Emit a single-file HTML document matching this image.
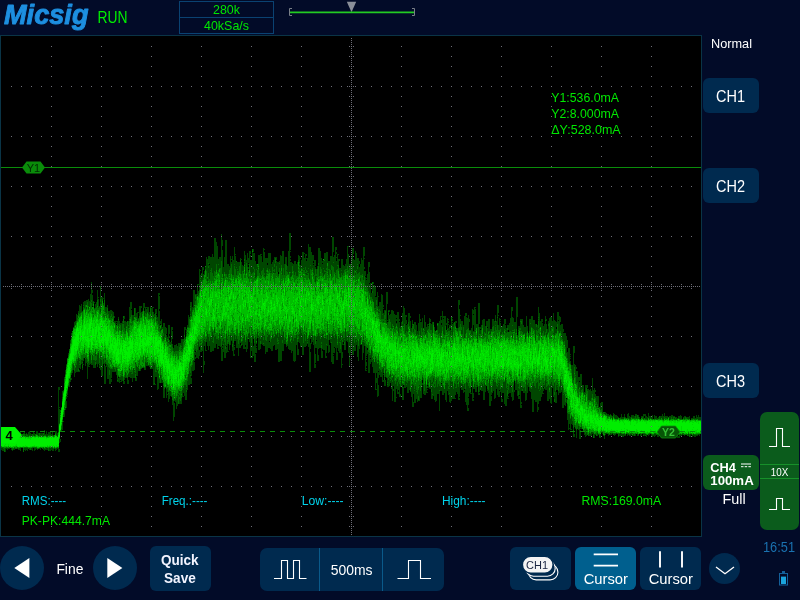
<!DOCTYPE html>
<html><head><meta charset="utf-8"><title>Micsig</title>
<style>
html,body{margin:0;padding:0;}
body{width:800px;height:600px;overflow:hidden;background:#020b28;font-family:"Liberation Sans",sans-serif;position:relative;color:#fff;}
.abs{position:absolute;}
.btn{position:absolute;background:#002a4f;border-radius:6px;}
.circ{position:absolute;background:#002a4f;border-radius:50%;}
svg{position:absolute;left:0;top:0;will-change:transform;}
svg text{font-family:"Liberation Sans",sans-serif;}
</style></head><body>
<svg id="plot" width="800" height="600" viewBox="0 0 800 600"><rect x="0" y="35" width="702" height="502" fill="#0a3446"/><rect x="1" y="36" width="700" height="500" fill="#000"/><g transform="translate(.5 0)" fill="none" stroke-width="1" shape-rendering="crispEdges"><path stroke="#004600" d="M1 431v19M2 435v16M3 431v20M4 433v19M5 432v20M6 433v16M7 433v17M8 433v16M9 436v13M10 433v15M11 432v18M12 432v19M13 431v19M14 434v16M15 434v15M16 434v15M17 432v17M18 432v18M19 433v17M20 431v20M21 435v13M22 434v14M23 433v19M24 432v18M25 434v17M26 433v17M27 434v17M28 432v17M29 431v19M30 433v17M31 434v16M32 434v17M33 431v17M34 433v18M35 434v16M36 431v18M37 431v19M38 433v16M39 433v16M40 433v17M41 433v15M42 433v16M43 433v17M44 430v21M45 434v16M46 431v19M47 434v16M48 432v19M49 432v19M50 431v20M51 434v16M52 431v20M53 435v16M54 435v14M55 431v20M56 431v19M57 433v16M58 387v65M59 387v3M59 407v1M59 409v34M59 449v3M60 410v22M60 439v3M61 407v25M62 391v39M63 390v27M63 421v1M64 377v40M65 370v40M66 364v35M66 401v7M67 358v37M67 396v1M68 353v34M69 349v38M70 340v42M71 333v42M71 378v2M72 331v42M73 327v43M74 322v55M75 321v52M76 314v58M77 315v57M78 311v61M79 305v63M79 370v2M80 306v63M81 304v60M82 311v59M83 302v59M83 364v1M84 301v57M85 301v65M86 300v63M87 300v79M88 299v68M89 301v64M89 366v1M90 294v70M91 282v83M92 290v3M92 295v11M92 307v58M93 301v67M94 302v1M94 308v60M95 304v64M96 302v62M97 290v77M98 297v1M98 299v65M99 306v62M100 286v84M101 286v1M101 297v79M102 297v79M103 298v1M103 303v61M104 293v91M105 307v57M105 366v18M106 307v60M107 305v74M108 311v68M109 311v73M110 310v74M111 310v68M111 379v3M112 311v61M113 312v60M114 316v2M114 321v51M115 321v51M116 321v1M116 323v1M116 325v50M117 321v61M118 317v60M118 378v4M119 321v62M120 323v57M120 381v1M121 323v59M122 321v60M123 316v68M124 316v3M124 321v59M124 381v3M125 321v57M126 322v56M127 321v63M128 321v56M128 380v4M129 307v70M130 302v76M131 302v7M131 310v68M132 315v67M133 315v63M134 308v70M135 308v73M136 313v63M136 377v4M137 312v64M138 312v1M138 318v53M139 306v65M140 306v65M141 306v2M141 312v57M142 311v57M143 303v65M144 303v5M144 311v59M145 307v63M146 307v1M146 309v57M147 307v59M148 307v59M149 312v55M150 306v63M151 308v61M152 307v62M153 307v1M153 312v73M154 314v71M155 309v68M155 384v1M156 309v5M156 315v62M157 317v73M158 293v96M159 293v2M159 296v13M159 311v72M160 321v3M160 325v58M161 319v64M162 327v56M163 323v75M164 323v75M165 327v61M166 328v6M166 335v63M167 337v55M167 394v1M168 325v77M169 325v9M169 336v2M169 340v59M170 342v54M171 327v70M172 327v3M172 331v8M172 344v61M173 348v73M174 345v56M174 403v14M175 345v57M176 344v65M177 346v60M178 343v61M179 343v61M180 343v61M181 339v65M182 339v58M183 339v54M183 396v1M184 327v69M185 327v3M185 337v63M186 329v71M187 325v65M188 315v70M189 317v68M190 302v82M191 302v74M191 378v6M192 307v64M193 290v81M194 290v71M194 362v8M195 294v57M195 352v3M195 357v2M196 294v64M197 284v74M198 284v1M198 291v68M199 269v78M199 350v6M200 270v1M200 275v77M201 273v79M202 267v84M203 267v3M203 274v99M204 271v75M204 361v4M205 266v85M206 257v85M206 350v1M207 259v87M208 256v94M209 256v8M209 265v81M210 257v95M211 257v95M212 254v97M213 257v94M214 238v110M215 238v110M216 242v102M217 246v103M218 259v87M218 347v2M219 257v89M220 257v90M221 234v127M222 240v6M222 250v95M222 346v2M222 349v12M223 267v85M224 257v101M225 240v118M226 240v106M226 347v6M227 264v88M228 264v80M228 351v1M229 266v84M230 256v89M231 259v1M231 262v79M232 256v95M233 260v96M234 247v94M234 345v1M234 347v3M234 354v2M235 254v1M235 256v85M236 261v87M237 262v86M238 262v94M239 262v86M240 258v85M240 345v3M241 259v1M241 262v84M242 265v80M243 266v83M244 251v98M245 255v90M245 347v2M246 260v92M247 253v96M248 258v5M248 264v1M248 267v2M248 270v69M249 251v91M250 251v3M250 255v2M250 260v98M251 260v91M251 357v1M252 249v109M253 249v3M253 253v86M253 346v10M254 253v109M255 261v92M255 354v8M256 264v80M256 346v1M256 348v5M257 264v74M258 255v95M259 255v95M260 254v95M261 254v1M261 256v88M262 262v83M263 248v98M264 249v1M264 252v94M265 258v96M266 258v94M267 258v5M267 265v87M268 253v95M269 253v88M269 342v6M270 253v96M271 264v87M272 262v89M273 260v86M274 257v88M275 257v93M276 257v3M276 261v89M277 262v87M278 262v10M278 274v88M279 261v101M280 255v106M281 256v105M282 251v100M283 251v100M284 264v80M285 257v87M286 257v90M287 266v80M288 251v98M289 233v117M290 233v17M290 251v1M290 256v2M290 259v2M290 262v88M291 262v91M292 263v88M293 264v97M294 261v101M295 261v100M296 264v81M297 262v93M298 255v87M298 349v6M299 256v87M300 258v1M300 265v82M301 260v87M302 252v103M303 252v103M304 253v1M304 258v89M305 254v93M306 254v2M306 258v1M306 261v85M307 258v86M308 244v103M309 247v125M310 247v92M310 343v6M310 352v20M311 252v92M312 255v87M313 255v6M313 263v1M313 265v80M314 260v108M315 260v6M315 267v81M315 354v9M315 364v4M316 269v71M316 341v7M317 266v95M318 248v101M318 355v6M319 248v100M320 251v97M321 258v100M322 261v2M322 264v85M322 351v7M323 259v91M324 253v97M325 253v105M326 252v101M326 356v2M327 252v94M328 261v92M329 261v79M329 345v7M330 256v87M331 256v106M332 237v127M333 237v15M333 257v96M333 354v1M333 356v8M334 255v92M334 348v5M335 247v101M336 247v3M336 252v2M336 257v1M336 261v99M337 254v94M337 352v8M338 254v1M338 259v92M339 259v2M339 268v85M340 268v85M341 259v109M342 259v86M342 352v6M342 364v1M343 265v77M343 344v1M344 266v84M345 264v86M346 259v82M347 246v96M348 246v1M348 254v99M349 264v103M350 264v89M350 354v1M350 359v1M351 256v91M352 248v107M353 248v6M353 259v96M354 260v91M355 251v100M356 253v92M357 258v99M358 258v103M359 261v3M359 267v82M360 264v81M361 258v87M362 260v100M363 247v106M364 247v9M364 258v1M364 267v2M364 271v75M365 271v5M365 277v94M366 278v1M366 280v76M366 357v1M366 359v1M366 362v4M366 368v1M366 370v1M367 274v74M367 350v4M368 262v111M369 262v5M369 272v11M369 284v89M370 283v75M370 359v5M371 283v2M371 293v69M372 282v85M373 282v2M373 285v88M374 285v88M375 287v9M375 297v93M376 297v76M376 378v5M376 389v1M377 292v105M378 296v1M378 306v65M378 372v6M378 385v11M379 302v73M380 302v75M381 294v83M382 295v87M383 305v2M383 308v1M383 313v60M383 374v1M383 380v2M384 310v76M385 310v67M385 380v6M386 292v86M387 292v12M387 320v1M387 322v65M388 310v77M389 310v2M389 315v71M390 314v69M391 310v79M392 310v91M393 311v75M393 389v2M394 314v88M395 315v87M396 315v3M396 319v2M396 323v66M396 397v1M397 312v82M398 312v78M398 392v2M399 319v2M399 322v75M400 326v61M400 394v3M401 322v65M402 313v87M403 306v79M403 387v13M404 308v80M405 315v73M406 315v2M406 320v4M406 325v62M407 324v69M408 313v80M409 313v77M410 316v2M410 321v71M411 328v69M412 320v87M413 324v70M413 402v5M414 322v81M415 322v81M416 325v74M417 331v71M418 323v78M419 314v87M420 319v2M420 322v76M421 322v76M422 318v62M422 383v2M422 386v1M423 328v66M424 315v80M425 322v73M426 327v66M427 324v61M427 386v2M427 389v1M427 392v1M428 324v1M428 326v62M429 318v71M430 319v3M430 323v66M431 324v75M432 322v77M433 322v74M434 327v73M435 331v71M436 330v71M437 323v71M438 323v71M439 321v90M440 316v75M441 316v1M441 320v3M441 325v58M441 384v7M442 311v84M443 316v2M443 319v76M444 316v77M445 316v84M446 323v2M446 330v72M447 318v73M448 319v1M448 321v2M448 324v1M448 328v67M449 325v77M450 325v3M450 330v73M451 317v84M452 317v1M452 319v2M452 322v1M452 324v75M453 323v76M454 322v77M455 321v74M455 398v1M456 321v2M456 328v64M457 328v66M458 300v100M459 300v5M459 309v88M459 398v2M460 315v1M460 319v69M461 321v69M462 321v69M463 325v68M464 316v73M464 390v2M465 313v89M466 313v3M466 317v88M467 318v93M468 315v82M468 398v7M468 408v3M469 319v3M469 330v63M470 330v64M471 328v58M471 393v1M472 309v92M473 310v4M473 315v10M473 331v58M473 393v5M473 399v2M474 307v82M475 307v1M475 309v83M476 324v68M477 324v63M478 303v92M479 303v21M479 327v65M479 393v2M480 327v2M480 330v60M481 325v66M482 320v71M483 319v81M484 319v81M485 326v66M486 321v65M487 321v6M487 328v63M488 319v74M489 319v87M490 329v77M491 329v66M491 396v5M492 319v74M493 319v72M494 321v78M495 315v83M496 321v68M497 305v90M498 305v8M498 315v1M498 325v72M499 318v72M499 391v6M500 319v1M500 321v1M500 323v69M501 326v76M502 326v67M502 399v3M503 324v69M504 319v85M505 319v5M505 325v81M506 328v78M507 325v74M508 325v5M508 332v62M508 396v1M508 398v1M509 323v70M510 318v68M510 387v6M511 307v90M512 307v4M512 317v84M513 318v82M514 322v59M514 390v2M515 322v68M516 297v93M517 297v20M517 335v61M518 326v73M519 326v69M519 396v3M520 319v89M521 319v72M521 402v2M521 405v3M522 319v72M523 325v68M524 327v66M525 327v74M526 316v84M527 326v67M528 333v54M529 319v72M530 319v73M531 316v83M532 316v96M533 320v92M534 320v80M535 324v78M536 324v78M537 325v87M538 307v97M538 407v3M539 313v88M540 321v80M541 319v78M542 319v3M542 323v71M543 326v61M543 388v3M543 393v1M544 324v65M545 316v74M546 319v2M546 324v66M547 329v72M548 321v80M549 318v81M550 317v86M551 317v87M552 321v67M553 313v84M554 320v82M555 321v82M556 322v5M556 329v61M556 392v11M557 312v78M558 312v8M558 321v74M559 316v77M560 317v5M560 325v68M561 324v68M562 324v84M563 329v3M563 333v75M564 333v72M565 333v73M566 336v62M566 399v4M567 340v8M567 352v68M568 348v82M569 348v76M569 428v1M570 354v1M570 356v1M570 358v1M570 361v69M571 365v59M571 429v1M572 365v60M573 346v91M574 346v7M574 364v63M574 434v3M575 365v64M576 367v2M576 371v67M577 371v58M578 377v53M579 377v4M579 382v57M580 374v55M580 430v9M581 374v55M582 385v44M583 385v46M584 392v43M585 385v52M586 385v51M587 385v3M587 389v46M588 389v47M589 390v46M590 389v47M591 391v45M592 378v56M593 390v48M594 388v50M595 390v2M595 394v41M596 396v40M597 396v40M598 396v39M599 407v31M600 403v35M601 402v31M602 402v32M603 412v24M604 412v27M605 412v23M606 413v21M607 414v20M608 414v22M609 415v20M610 414v21M611 415v20M612 416v18M613 413v22M614 414v22M615 415v20M616 415v19M617 416v18M618 417v20M619 418v18M620 417v19M621 414v23M622 417v20M623 417v20M624 414v22M625 417v19M626 418v16M627 414v22M628 413v22M629 416v20M630 417v19M631 415v20M632 415v21M633 415v21M634 416v20M635 414v22M636 414v20M637 415v21M638 415v21M639 417v17M640 419v17M641 416v20M642 416v18M643 414v22M644 414v2M644 418v18M645 414v22M646 416v21M647 417v18M648 413v23M649 416v19M650 416v18M651 416v20M652 415v22M653 419v17M654 415v22M655 416v20M656 416v19M657 418v19M658 417v20M659 416v20M660 416v19M661 416v21M662 414v24M663 416v19M664 413v23M665 416v21M666 416v20M667 416v18M668 417v20M669 416v22M670 416v21M671 415v21M672 415v20M673 416v20M674 416v20M675 417v20M676 417v18M677 418v20M678 416v19M678 436v2M679 416v22M680 415v21M681 416v20M682 419v16M683 417v18M684 416v20M685 416v19M686 417v18M687 417v19M688 417v19M689 416v21M690 420v17M691 418v17M692 418v19M693 416v20M694 416v21M695 418v19M696 415v21M697 417v19M698 415v20M699 417v19M700 417v17"/><path stroke="#006c00" d="M1 436v12M2 435v13M3 435v14M4 436v16M5 435v13M6 433v15M7 434v14M8 435v13M9 437v11M10 435v13M11 432v16M12 434v16M13 436v13M14 436v12M15 436v13M16 436v13M17 435v13M18 435v14M19 435v13M20 435v13M21 435v13M22 434v14M23 434v18M24 434v14M25 436v12M26 434v14M27 435v13M28 436v13M29 435v13M30 436v14M31 436v12M32 434v14M33 435v13M34 436v12M35 434v14M36 434v14M37 435v14M38 436v13M39 433v15M40 435v13M41 435v13M42 435v14M43 433v2M43 436v12M44 435v14M45 435v14M46 436v12M47 436v12M48 435v16M49 435v13M50 435v13M51 436v12M52 435v13M53 436v13M54 435v13M55 433v16M56 435v13M57 436v12M58 432v16M59 423v16M60 410v2M60 413v19M61 407v22M62 397v25M63 391v24M63 416v1M64 379v31M65 374v34M66 365v31M67 358v33M68 355v31M69 349v30M69 380v2M70 343v37M71 338v35M72 331v39M73 328v37M74 326v45M75 325v43M76 321v44M77 318v43M78 313v45M78 369v2M79 314v46M79 361v2M79 364v1M80 313v52M81 312v48M82 312v48M82 362v1M82 365v3M83 305v1M83 307v51M84 308v50M85 305v52M85 358v1M86 305v2M86 309v49M87 302v60M87 363v1M88 306v1M88 309v54M89 307v46M90 302v53M91 300v2M91 303v60M92 307v48M93 302v58M94 309v51M95 308v44M95 353v1M95 356v5M95 362v3M96 307v53M97 300v55M98 308v45M99 307v56M99 364v1M99 367v1M100 299v3M100 304v3M100 308v1M100 312v43M100 356v1M100 358v1M101 304v56M102 299v67M102 367v1M103 305v54M104 300v63M104 365v1M105 312v46M105 360v2M106 313v51M107 308v57M108 314v53M109 318v50M109 370v5M110 316v53M111 314v3M111 318v51M112 317v52M113 316v5M113 322v45M114 323v46M115 324v47M116 325v43M117 324v54M117 380v1M118 319v1M118 326v1M118 328v48M119 324v53M120 325v52M121 331v45M122 324v50M122 375v1M123 316v2M123 319v4M123 324v57M124 328v49M125 331v41M126 326v51M127 321v57M128 325v1M128 328v46M129 319v1M129 321v48M129 370v2M130 317v55M131 315v57M131 373v1M132 321v53M133 320v48M134 308v8M134 317v53M134 371v1M135 317v46M135 364v9M135 374v4M136 317v49M137 321v46M138 319v47M138 367v1M139 316v55M140 313v56M141 317v51M142 312v56M143 308v59M144 316v52M145 313v49M146 314v49M147 312v50M148 314v51M149 315v50M150 308v61M151 316v52M152 312v54M153 315v2M153 318v45M154 317v48M154 383v1M155 313v59M156 318v1M156 321v48M156 371v1M157 321v49M158 324v50M159 326v1M159 328v51M160 325v4M160 331v44M160 378v5M161 325v1M161 330v49M162 329v51M163 333v3M163 339v47M164 337v52M165 334v53M166 341v48M167 339v1M167 342v46M168 339v3M168 343v49M168 393v1M169 344v47M170 345v46M171 341v1M171 344v52M172 347v53M173 351v50M174 352v47M175 351v49M176 351v47M177 351v45M178 351v43M178 395v9M179 347v44M179 393v2M179 397v2M180 345v56M181 346v1M181 348v1M181 350v48M182 349v41M183 342v46M184 335v2M184 338v47M185 339v46M186 332v1M186 334v53M186 388v1M186 390v2M187 327v54M188 327v47M189 319v52M190 306v1M190 308v3M190 314v1M190 316v57M190 375v1M191 316v51M192 310v55M193 308v52M194 305v1M194 307v43M194 352v1M195 295v4M195 301v48M196 297v55M197 294v1M197 296v54M198 295v47M199 290v56M200 278v1M200 280v1M200 282v1M200 285v57M200 343v2M201 274v1M201 281v69M202 280v63M203 278v62M204 275v64M204 340v1M205 266v1M205 269v73M206 271v68M207 277v2M207 281v53M208 263v1M208 266v2M208 273v64M209 279v62M210 270v1M210 272v65M211 268v69M211 338v1M212 273v59M212 341v1M213 276v59M213 337v6M214 271v58M214 333v4M215 272v64M216 264v75M217 272v67M218 264v1M218 270v70M219 268v65M220 268v71M221 261v74M221 337v9M221 348v1M222 274v63M222 338v3M223 278v61M223 344v1M224 272v70M225 274v71M225 346v3M226 274v60M227 277v62M227 340v4M228 274v61M228 336v6M229 270v75M230 268v67M231 264v72M231 337v3M232 275v61M232 344v3M233 275v68M234 264v1M234 266v69M235 269v70M236 261v1M236 267v1M236 275v61M237 269v1M237 271v68M238 271v73M239 266v74M240 260v71M241 274v68M241 344v1M242 271v63M242 335v6M243 271v1M243 273v65M244 259v2M244 262v1M244 264v71M245 274v68M246 263v74M247 267v72M248 272v5M248 278v56M248 338v1M249 264v69M250 272v66M251 274v69M252 249v3M252 273v61M252 335v1M253 267v2M253 272v64M254 269v74M255 278v59M256 269v1M256 277v62M256 341v2M257 264v3M257 270v62M258 264v72M258 337v1M259 273v64M260 275v64M260 341v3M261 271v4M261 276v60M262 270v63M262 334v1M263 268v66M263 335v1M263 337v3M263 343v1M264 273v2M264 276v60M265 277v63M266 270v2M266 273v68M267 268v66M267 335v2M268 271v64M269 269v66M270 271v1M270 273v69M271 273v66M272 267v68M273 270v1M273 273v65M274 264v3M274 269v3M274 273v64M275 258v5M275 273v61M276 266v69M277 272v61M277 338v4M277 343v1M278 276v61M278 340v1M278 342v2M279 263v1M279 268v65M280 271v65M281 265v70M282 275v60M282 340v3M283 268v64M284 275v65M285 264v74M286 265v5M286 271v74M287 272v72M288 274v61M289 272v65M290 272v1M290 277v65M291 276v64M291 342v1M292 266v71M293 271v70M294 275v63M295 272v66M296 276v56M296 333v2M297 276v66M298 260v75M298 336v3M299 262v1M299 265v2M299 268v63M299 332v2M300 271v58M301 268v65M302 269v2M302 272v63M303 268v1M303 270v73M304 270v64M305 267v3M305 272v1M305 274v67M306 270v3M306 275v58M307 271v1M307 273v1M307 275v64M307 340v1M307 342v1M308 268v1M308 273v65M309 279v56M310 265v1M310 269v68M311 270v65M312 268v67M313 273v2M313 276v64M314 275v61M315 269v7M315 282v62M316 274v2M316 277v60M317 269v67M318 263v2M318 266v67M319 276v60M320 267v72M321 269v66M321 342v2M321 345v3M322 273v61M323 259v1M323 268v1M323 276v58M323 335v2M324 260v1M324 270v2M324 274v64M325 271v1M325 273v63M325 337v1M326 268v2M326 271v68M326 344v1M327 263v68M327 332v3M328 269v1M328 275v65M329 269v65M330 270v69M331 265v5M331 276v61M331 338v1M331 342v1M332 266v68M333 262v1M333 267v69M334 272v66M335 273v1M335 275v59M336 270v66M337 265v1M337 269v76M338 265v69M338 335v1M339 274v64M339 342v1M340 277v57M340 340v1M340 342v7M341 270v1M341 273v67M342 275v60M342 338v1M342 340v2M343 273v65M344 270v68M344 339v1M344 342v3M345 269v60M346 269v1M346 271v66M347 266v71M347 338v2M348 270v64M349 268v6M349 275v60M349 336v6M350 264v1M350 266v4M350 272v64M351 266v1M351 275v62M352 267v74M353 275v61M354 270v73M355 271v2M355 275v64M356 270v1M356 272v67M356 340v2M357 264v1M357 266v3M357 274v66M358 273v73M359 272v67M360 275v3M360 281v57M361 275v69M362 274v68M363 280v57M363 339v1M363 341v1M364 276v67M365 285v61M366 286v61M367 288v60M368 291v61M369 293v60M369 354v1M370 297v58M371 297v53M372 282v2M372 291v2M372 299v59M372 359v1M373 302v57M374 308v54M375 308v1M375 310v47M375 358v1M376 300v5M376 306v56M377 307v57M378 310v1M378 313v47M378 362v1M379 309v3M379 313v56M380 311v59M381 319v53M382 314v1M382 319v50M383 319v2M383 322v46M384 315v62M384 378v2M385 311v8M385 320v50M386 323v54M387 325v53M387 382v1M387 384v1M388 311v1M388 313v2M388 322v55M388 378v2M389 319v57M389 377v1M390 322v52M390 377v2M390 380v1M391 328v52M392 324v3M392 328v50M392 380v2M393 326v50M394 329v52M395 327v57M396 324v57M397 327v52M397 382v4M398 333v49M399 328v56M400 329v58M401 327v51M401 379v1M402 321v3M402 326v58M402 387v1M403 326v1M403 328v57M404 324v61M405 333v48M406 331v51M406 384v1M407 332v51M408 322v59M409 326v55M410 331v60M411 332v55M412 324v1M412 326v55M412 382v2M413 324v5M413 332v53M414 329v60M414 390v1M415 330v56M416 335v55M416 391v1M417 334v60M418 335v55M418 396v4M419 331v54M419 386v1M420 335v56M421 328v58M422 332v45M423 328v57M424 330v1M424 332v59M425 334v47M426 333v55M427 330v50M428 329v53M428 383v2M429 323v64M430 330v50M431 330v53M431 384v1M431 389v3M432 333v49M432 384v2M432 394v1M433 322v56M433 382v5M434 330v54M434 386v2M435 331v56M436 330v50M437 323v3M437 330v57M438 334v50M439 333v53M439 390v1M440 336v1M440 338v49M441 333v48M441 382v1M442 327v58M443 334v53M444 335v54M445 326v57M445 384v1M446 330v53M447 329v1M447 332v51M448 331v54M448 386v3M449 327v1M449 331v56M449 388v1M449 393v1M450 335v46M451 317v4M451 327v4M451 332v50M451 384v1M452 335v47M453 327v62M454 322v61M455 326v58M455 387v1M456 328v60M457 331v50M457 383v1M458 328v59M459 327v55M460 324v59M461 327v3M461 334v50M461 386v1M462 334v50M463 327v59M464 338v46M465 334v55M466 330v52M467 329v54M468 328v53M468 382v4M469 331v57M470 331v3M470 335v53M470 389v3M471 334v44M471 379v3M472 335v46M473 332v55M474 332v52M475 330v1M475 332v55M476 328v57M476 386v1M477 339v1M477 341v44M478 327v65M479 334v1M479 336v50M480 334v51M480 386v1M480 388v2M481 330v53M481 384v2M481 387v1M482 325v59M483 336v50M484 332v51M485 333v52M486 326v60M487 334v46M487 381v8M488 331v59M489 331v2M489 334v45M490 334v52M491 331v61M492 327v59M493 326v54M494 331v51M495 321v1M495 325v1M495 327v55M496 330v5M496 336v50M497 317v1M497 325v59M497 385v2M498 330v53M498 384v1M499 330v51M499 382v1M500 329v3M500 335v54M501 334v52M502 332v56M503 334v48M504 329v53M505 330v1M505 332v46M506 333v55M507 328v2M507 332v52M507 386v1M507 388v1M507 390v6M508 332v58M509 332v53M510 331v54M511 332v53M512 325v1M512 330v1M512 332v2M512 338v54M513 330v1M513 332v53M514 329v51M515 333v50M516 329v51M517 337v47M518 330v1M518 332v52M518 387v1M518 391v4M519 328v61M520 321v1M520 328v2M520 331v52M521 321v3M521 331v56M522 332v55M522 389v2M523 334v54M524 333v54M525 339v52M526 333v47M527 331v54M528 337v46M529 331v56M530 323v1M530 332v56M531 327v58M531 387v2M532 328v58M533 329v54M534 330v56M535 340v48M536 324v3M536 330v53M537 331v51M538 317v1M538 319v1M538 321v7M538 329v4M538 334v55M539 328v6M539 336v44M539 383v3M539 390v1M540 327v63M541 335v50M542 333v56M543 331v52M543 384v1M544 335v50M544 387v1M545 320v1M545 332v48M546 329v4M546 337v45M546 383v4M547 334v52M548 324v2M548 332v53M549 323v63M549 387v5M550 331v53M551 328v54M552 326v59M553 327v6M553 334v52M554 335v48M554 392v3M554 399v3M555 333v58M556 333v52M557 324v59M557 384v1M557 386v1M558 331v60M559 333v54M560 331v49M561 334v1M561 336v54M562 339v47M563 342v51M563 394v1M564 341v53M565 347v55M566 353v45M567 358v55M568 363v51M569 362v52M570 364v55M571 369v47M572 378v43M573 380v48M573 430v1M574 367v58M575 375v1M575 377v51M576 383v47M577 382v47M578 389v37M579 387v42M580 392v35M581 390v37M582 389v40M583 393v38M584 394v38M585 393v1M585 395v39M586 388v42M586 431v1M587 391v44M588 400v36M589 400v33M590 401v33M591 398v34M592 394v38M593 399v34M593 435v3M594 397v37M595 398v36M596 402v3M596 406v30M597 404v29M598 408v26M599 407v30M600 410v24M601 409v23M602 413v19M603 412v23M604 412v1M604 414v22M605 415v18M606 414v19M607 416v18M608 416v18M609 416v19M610 415v18M611 416v18M612 419v14M613 415v20M614 418v16M615 419v15M616 419v14M617 419v15M618 418v18M619 418v16M620 418v15M621 419v15M622 419v15M623 419v15M624 417v17M625 418v17M626 418v16M627 418v16M628 418v16M629 419v16M630 419v15M631 417v17M632 418v17M633 418v16M634 418v18M635 416v18M636 418v16M637 415v19M638 417v18M639 419v15M640 419v15M641 418v16M642 417v17M643 419v15M643 435v1M644 418v16M645 419v15M645 435v1M646 419v16M647 420v15M648 418v16M649 419v15M650 418v16M651 419v15M652 419v16M653 419v16M654 419v15M655 419v15M656 419v16M657 419v16M658 419v16M659 416v18M660 419v15M661 418v16M662 419v15M662 436v2M663 420v15M664 417v17M665 418v17M666 418v17M667 419v15M668 417v18M669 420v15M670 419v16M671 417v17M672 419v16M673 417v19M674 417v1M674 419v16M675 418v19M676 419v15M677 419v16M678 418v16M679 419v16M680 419v15M681 419v16M682 419v15M683 418v17M684 419v16M685 417v18M686 418v17M687 419v17M688 419v15M689 419v18M690 420v14M691 419v15M692 419v16M693 419v15M694 419v16M695 419v16M696 419v16M697 419v16M698 420v14M699 420v14M700 420v14"/><path stroke="#009600" d="M1 437v10M2 436v11M3 436v11M4 436v12M5 436v12M6 436v11M7 435v1M7 437v11M8 436v12M9 438v9M10 436v12M11 436v12M12 435v13M13 436v12M14 436v11M15 436v12M16 436v12M17 436v11M18 436v12M19 436v12M20 436v11M21 437v10M22 437v10M23 436v12M24 436v11M25 436v11M26 437v10M27 437v10M28 437v11M29 436v12M30 436v12M31 437v11M32 436v11M33 436v11M34 436v11M35 436v11M36 435v12M37 435v13M38 436v12M39 436v12M40 437v10M41 436v12M42 437v11M43 436v11M44 436v12M45 436v11M46 437v10M47 437v11M48 436v12M49 436v11M50 436v12M51 437v10M52 436v11M53 437v11M54 435v12M55 434v14M56 436v12M57 437v10M58 432v16M59 424v15M60 413v1M60 415v16M61 408v18M62 399v21M62 421v1M63 392v22M64 383v24M64 409v1M65 375v26M65 407v1M66 367v27M66 395v1M67 359v31M68 357v28M69 351v28M70 344v33M71 339v32M72 331v1M72 333v31M73 328v35M74 328v38M75 325v38M75 366v1M76 323v36M77 321v38M78 316v2M78 319v38M79 317v41M80 316v43M81 313v42M82 320v35M83 310v44M84 309v40M84 353v1M85 313v42M86 305v2M86 310v43M87 306v53M88 310v1M88 313v48M89 307v3M89 312v38M90 311v42M91 309v45M91 355v5M92 307v2M92 311v1M92 314v41M93 304v2M93 307v6M93 314v1M93 317v36M93 355v1M94 310v43M95 314v35M96 311v43M97 306v1M97 310v43M98 310v41M99 314v44M100 314v38M101 308v44M102 301v56M103 306v4M103 311v3M103 317v39M104 312v1M104 314v1M104 318v36M104 355v3M105 314v1M105 316v38M106 318v42M107 315v45M108 318v37M108 356v7M109 320v44M110 320v40M110 362v5M111 321v1M111 323v39M111 364v4M112 319v46M112 366v1M113 322v44M114 323v44M115 330v37M116 331v36M117 326v42M117 369v1M118 332v43M119 327v1M119 330v47M120 331v42M120 374v1M121 334v37M122 330v40M123 332v45M124 334v41M125 334v38M126 327v1M126 329v44M127 332v39M127 373v2M128 336v37M129 328v1M129 330v36M129 367v1M130 319v4M130 325v45M131 322v1M131 326v41M132 325v45M133 321v47M134 317v2M134 320v48M134 369v1M135 318v44M136 319v1M136 321v43M137 322v45M138 321v40M138 362v1M139 322v38M139 365v4M140 318v47M141 318v48M142 314v46M142 362v2M142 365v2M143 311v45M143 363v3M144 320v47M145 317v40M146 317v41M147 313v44M147 358v2M147 361v1M148 319v46M149 319v44M150 314v2M150 319v46M151 318v45M151 364v1M152 320v42M153 319v43M154 323v40M155 317v46M156 323v44M157 325v45M158 331v36M158 368v1M158 371v2M159 332v46M160 326v2M160 333v35M161 330v45M162 329v4M162 341v39M163 341v41M164 340v4M164 345v42M165 338v49M166 342v41M167 346v39M167 386v1M168 341v1M168 346v41M169 345v2M169 348v42M170 345v2M170 349v1M170 351v1M170 353v35M170 390v1M171 352v40M172 351v44M173 356v36M173 393v1M174 354v42M174 397v1M175 356v1M175 358v35M176 354v42M177 356v37M178 359v31M179 350v1M179 352v39M180 351v38M180 390v1M181 352v39M181 394v1M182 352v34M183 348v37M183 386v1M184 341v1M184 345v37M185 340v1M185 342v33M185 378v2M186 336v44M187 328v1M187 330v2M187 333v44M188 328v5M188 334v40M189 328v35M190 320v41M190 364v2M191 317v48M192 312v46M192 359v2M193 310v50M194 305v1M194 312v33M195 305v39M195 345v1M196 305v38M197 296v46M197 344v1M198 297v42M199 293v47M200 286v2M200 289v50M201 283v3M201 287v1M201 289v50M201 340v1M201 343v1M202 283v1M202 285v53M203 280v55M204 275v57M205 266v1M205 270v7M205 279v58M206 281v2M206 284v46M206 331v1M206 334v2M207 277v1M207 284v47M208 281v1M208 283v51M209 283v2M209 286v48M210 281v50M210 332v5M211 284v43M212 281v48M213 283v48M214 278v2M214 281v46M215 276v1M215 279v53M215 333v1M216 270v4M216 275v58M217 274v4M217 279v3M217 283v38M217 322v1M217 324v1M217 327v6M218 273v50M218 325v10M218 336v2M219 269v3M219 275v55M219 332v1M220 289v45M220 336v1M221 278v1M221 280v1M221 282v43M221 327v2M222 274v3M222 278v50M222 331v2M223 286v45M223 332v1M223 334v1M224 274v2M224 281v45M224 331v2M224 337v1M225 278v46M225 325v13M226 277v1M226 280v51M226 332v1M227 278v1M227 280v56M228 282v48M229 274v1M229 276v1M229 278v1M229 281v54M229 336v1M230 278v2M230 283v50M231 274v56M231 332v1M232 279v49M233 277v54M233 332v1M234 282v1M234 284v49M235 278v57M236 278v51M237 276v1M237 278v1M237 281v48M238 275v61M239 273v2M239 277v56M240 274v57M241 278v55M241 334v2M241 339v2M242 280v46M242 337v1M243 274v57M243 332v1M244 265v1M244 267v8M244 278v53M244 332v3M245 278v50M245 329v11M246 273v61M247 277v52M247 332v4M248 279v54M248 338v1M249 270v3M249 274v2M249 282v45M250 279v48M250 328v7M251 279v1M251 281v45M252 251v1M252 283v46M252 330v1M252 333v1M253 277v1M253 282v52M254 273v2M254 276v1M254 280v50M254 331v4M254 336v2M255 281v51M256 279v55M256 341v1M257 264v1M257 276v53M258 266v1M258 268v1M258 276v56M258 333v2M259 278v53M259 332v1M260 279v1M260 282v50M261 278v50M261 330v3M262 275v4M262 280v47M263 277v53M264 278v57M265 280v50M266 276v56M267 270v2M267 274v1M267 276v3M267 280v50M268 274v58M269 273v61M270 281v50M271 276v1M271 278v53M271 332v6M272 274v54M272 329v2M273 273v1M273 279v48M273 328v6M274 285v44M274 335v1M275 278v53M276 276v1M276 278v51M276 330v4M277 277v51M277 329v1M278 278v55M279 274v55M280 285v49M281 268v3M281 273v1M281 279v1M281 281v48M282 281v46M283 278v47M283 326v5M284 283v54M285 278v52M285 331v1M286 276v59M286 337v2M286 340v2M287 275v66M288 275v58M289 272v1M289 279v49M289 329v6M290 281v51M290 333v1M290 339v2M291 277v3M291 281v53M292 272v1M292 275v4M292 280v3M292 284v51M293 278v41M293 322v9M294 282v53M295 280v48M295 329v4M295 334v1M296 279v5M296 286v46M297 278v1M297 280v1M297 283v46M297 332v2M297 338v1M298 262v4M298 267v2M298 271v1M298 277v55M299 272v1M299 274v5M299 280v45M300 271v2M300 274v1M300 278v49M301 269v2M301 272v56M301 329v1M302 277v51M303 274v1M303 281v51M304 274v2M304 278v1M304 280v1M304 282v44M304 330v1M304 333v1M305 278v54M305 334v1M306 280v48M306 331v1M307 280v59M308 278v4M308 283v53M309 280v52M310 282v51M311 274v1M311 284v39M312 270v1M312 272v59M313 279v57M314 282v53M315 284v2M315 287v1M315 291v45M316 281v53M317 278v2M317 281v48M317 333v1M318 277v1M318 279v50M319 279v54M320 272v1M320 276v5M320 290v42M320 333v1M321 276v1M321 278v55M322 277v53M323 259v1M323 278v53M324 275v4M324 280v45M324 326v5M324 334v2M324 337v1M325 280v52M326 280v55M327 263v3M327 272v1M327 274v1M327 276v1M327 278v44M327 323v1M327 333v2M328 281v2M328 287v46M329 278v54M330 274v60M331 280v54M332 278v53M333 277v3M333 284v39M333 325v1M333 327v1M334 274v56M334 331v1M334 334v1M335 283v48M336 278v56M337 279v60M337 342v1M338 271v7M338 279v49M338 335v1M339 277v51M339 329v1M340 278v55M341 277v56M342 280v52M343 276v55M344 276v1M344 278v54M345 272v56M346 275v4M346 280v43M346 324v8M347 271v1M347 274v57M348 278v53M349 278v47M349 332v1M350 275v51M350 327v8M351 278v57M352 277v6M352 284v49M353 280v52M353 333v1M354 276v2M354 279v54M354 336v1M355 271v1M355 281v1M355 285v2M355 288v39M355 329v4M356 280v1M356 282v1M356 284v53M357 283v49M358 279v55M358 339v2M359 277v57M360 282v3M360 288v38M360 330v6M361 283v52M361 340v4M362 276v1M362 289v51M363 283v51M364 291v49M365 289v1M365 291v45M365 338v1M365 340v1M366 292v4M366 298v1M366 301v39M366 341v3M367 292v53M368 299v43M369 295v4M369 304v46M370 300v53M371 302v1M371 304v43M372 301v50M372 356v1M373 302v54M373 358v1M374 311v51M375 314v3M375 318v38M376 312v46M377 309v1M377 312v48M377 362v1M378 315v1M378 317v37M379 319v46M379 367v1M380 320v1M380 322v2M380 330v33M381 322v45M382 323v44M383 323v43M384 323v43M384 368v5M385 323v39M386 324v1M386 326v43M386 371v2M387 328v44M388 328v44M389 329v46M390 328v1M390 331v40M391 331v44M391 376v1M392 329v45M392 376v1M393 326v1M393 328v1M393 335v40M394 332v43M395 333v41M395 375v2M395 378v2M396 326v2M396 330v48M397 331v46M398 336v41M399 336v44M400 333v47M400 381v1M401 330v1M401 333v5M401 341v33M402 326v54M402 381v2M403 331v45M403 377v1M403 379v1M403 382v1M404 334v47M405 335v42M406 337v39M407 337v3M407 341v39M408 327v2M408 331v4M408 336v34M408 371v6M409 329v3M409 334v45M410 335v44M410 388v1M411 335v42M411 379v5M412 333v44M413 334v48M414 335v45M415 334v1M415 336v42M415 383v1M416 336v43M416 380v2M417 339v38M418 338v2M418 341v1M418 343v38M418 387v1M419 335v1M419 339v39M420 338v41M420 380v1M421 338v42M422 339v36M423 329v1M423 335v43M424 336v48M425 335v5M425 343v35M426 337v48M427 331v1M427 338v41M428 332v44M429 333v45M429 382v5M430 334v43M431 336v40M432 340v33M432 374v1M433 325v51M434 334v40M434 375v1M435 334v45M435 380v1M436 331v1M436 335v1M436 337v40M437 324v1M437 335v43M438 338v39M439 336v45M440 343v39M441 336v2M441 343v1M441 345v31M441 378v1M442 331v7M442 339v38M443 339v42M443 383v2M444 337v1M444 339v50M445 335v46M446 333v1M446 335v1M446 341v40M447 335v1M447 337v43M448 334v1M448 337v44M449 340v40M450 337v4M450 343v34M451 327v2M451 338v39M452 340v41M453 332v54M454 336v45M455 327v2M455 330v6M455 337v42M456 331v46M457 332v44M457 378v1M458 336v44M458 382v2M459 331v46M460 331v8M460 341v39M461 335v1M461 338v1M461 340v43M462 338v38M462 377v3M463 339v43M463 383v1M464 338v45M465 338v45M466 333v45M467 341v38M468 338v40M469 333v2M469 340v43M470 335v3M470 340v46M471 338v37M472 339v40M473 338v2M473 342v45M474 336v46M475 337v41M475 381v1M476 328v7M476 336v1M476 338v39M477 343v39M478 336v50M479 338v42M479 382v1M480 336v1M480 338v44M481 336v1M481 338v43M482 328v6M482 335v1M482 339v38M482 378v1M482 381v1M483 339v40M483 380v1M484 338v41M485 334v1M485 337v40M485 378v1M485 380v5M486 342v38M487 339v38M487 378v1M488 332v2M488 335v4M488 342v41M489 335v43M490 336v1M490 338v1M490 340v36M490 380v4M491 332v49M491 382v1M491 384v1M492 332v47M492 380v1M493 332v1M493 336v40M493 378v1M494 337v37M494 376v1M495 335v42M495 378v1M496 339v44M497 333v46M498 336v41M498 379v1M499 332v7M499 340v38M500 339v41M501 335v1M501 338v41M502 335v45M502 384v1M502 386v1M503 336v40M503 377v2M504 331v2M504 335v46M505 340v37M506 338v40M506 379v1M507 337v46M508 338v1M508 340v44M509 340v32M509 375v7M510 336v38M510 377v1M510 379v3M511 335v40M511 376v1M511 379v1M511 382v1M512 339v43M512 385v1M513 332v1M513 334v48M514 332v1M514 340v39M515 340v1M515 342v39M516 333v1M516 335v42M517 340v40M518 336v1M518 341v41M519 331v43M519 376v5M519 382v1M520 335v1M520 337v44M521 334v40M521 376v5M522 335v46M523 335v47M524 334v48M525 342v38M525 382v2M526 337v40M526 378v1M527 332v48M528 338v40M529 335v41M529 377v3M530 337v2M530 340v39M530 383v4M531 328v46M531 375v2M531 378v3M532 333v1M532 335v40M532 382v1M533 331v3M533 335v42M534 334v47M535 341v38M536 335v6M536 342v32M536 376v1M537 336v42M538 340v35M538 376v1M539 340v34M539 375v1M540 327v4M540 332v48M540 382v1M541 339v41M542 336v3M542 340v38M543 336v42M544 336v45M545 335v41M546 338v38M547 335v44M547 380v1M548 333v51M549 339v38M549 379v1M549 388v2M550 339v40M551 339v38M552 329v2M552 335v37M553 336v3M553 340v39M554 339v40M554 380v2M555 335v46M556 334v45M557 331v48M558 336v45M558 382v2M559 333v53M560 333v3M560 341v38M561 340v42M562 341v43M563 345v43M564 345v47M565 356v36M565 394v2M566 358v35M566 394v1M566 396v2M567 361v1M567 363v35M567 400v4M568 367v2M568 370v40M568 411v1M569 364v48M570 365v47M570 413v5M571 373v42M572 383v34M573 385v32M574 373v1M574 378v41M574 420v1M575 384v41M576 385v38M577 393v28M578 397v27M579 388v1M579 392v34M580 396v2M580 399v28M581 393v31M582 392v37M583 396v34M584 395v34M585 402v26M586 394v35M586 431v1M587 401v29M587 431v1M588 405v29M589 402v27M589 430v1M590 401v32M591 402v30M592 398v2M592 402v29M593 406v25M594 399v35M595 404v1M595 406v27M596 408v24M597 406v1M597 408v1M597 410v21M598 408v1M598 412v22M599 409v25M600 412v22M601 412v19M602 415v17M603 414v21M604 414v19M604 434v1M605 415v18M606 416v17M607 418v15M608 417v16M609 417v17M610 419v14M611 418v15M612 420v13M613 417v16M614 419v14M615 419v14M616 419v14M617 419v14M618 418v15M619 420v13M620 419v14M621 419v14M622 419v15M623 419v15M624 418v15M625 419v15M626 419v14M627 420v13M628 419v14M629 420v14M630 420v13M631 418v15M632 419v14M632 434v1M633 419v15M634 419v15M635 419v14M636 419v15M637 419v14M638 419v15M639 419v15M640 420v13M641 418v16M642 419v14M643 420v13M644 419v14M645 420v14M646 420v14M647 420v15M648 418v16M649 420v13M650 419v14M651 419v15M652 420v14M653 419v15M654 420v13M655 419v14M656 420v14M657 420v14M658 419v15M659 419v15M660 420v14M661 418v16M662 420v13M663 420v13M664 419v14M665 420v14M666 419v16M667 419v14M668 418v16M669 420v14M670 420v15M671 419v15M672 419v14M673 419v15M674 420v14M675 420v14M676 420v13M677 419v14M678 419v15M679 419v15M680 420v14M681 420v14M682 420v13M683 419v14M684 420v14M685 419v15M686 419v15M687 419v15M688 420v13M689 419v15M690 420v14M691 420v14M692 420v15M693 419v15M694 420v14M695 420v14M696 420v14M697 419v15M698 420v14M699 420v14M700 420v14"/><path stroke="#00be00" d="M1 437v9M2 437v10M3 437v10M4 437v10M5 436v11M6 437v10M7 437v10M8 436v10M9 438v9M10 437v10M11 437v10M12 436v11M13 437v11M14 437v10M15 437v10M16 437v9M17 436v11M18 436v11M19 437v10M20 436v11M21 437v10M22 437v10M23 436v11M24 437v10M25 437v10M26 437v10M27 437v10M28 437v10M29 436v11M30 437v10M31 437v10M32 437v10M33 436v11M34 437v10M35 437v10M36 435v12M37 436v12M38 437v11M39 437v10M40 437v10M41 437v10M42 437v10M43 437v10M44 436v12M45 436v11M46 437v10M47 437v10M48 436v11M49 437v10M50 436v11M51 437v10M52 436v11M53 437v11M54 437v10M55 435v13M56 436v11M57 437v10M58 433v14M59 424v14M60 415v1M60 417v13M61 408v17M62 401v18M63 393v19M64 387v18M65 377v1M65 379v21M66 369v24M67 363v26M68 359v24M69 354v24M70 347v26M71 344v24M72 337v25M73 330v33M74 329v32M74 364v1M75 326v1M75 329v32M76 327v30M77 322v29M78 322v32M79 318v30M79 351v1M79 353v3M79 357v1M80 317v35M81 315v38M82 325v25M83 319v32M84 310v35M84 346v1M85 315v38M86 312v3M86 316v1M86 318v35M87 316v38M87 355v2M88 314v38M88 353v1M88 355v1M89 307v1M89 317v31M90 313v37M90 351v1M91 314v36M92 320v28M92 349v3M93 318v28M93 347v1M94 315v36M95 316v33M96 317v32M96 352v2M97 312v37M98 313v1M98 320v27M98 348v1M98 350v1M99 319v31M100 315v36M101 311v1M101 313v39M102 318v28M102 347v3M102 352v1M103 320v34M104 320v26M104 347v2M104 351v1M105 316v32M106 318v2M106 321v1M106 323v35M107 321v3M107 326v24M107 351v1M107 355v2M108 319v33M109 320v39M110 326v32M110 359v1M110 365v1M111 325v33M112 326v38M113 329v34M113 364v1M114 325v3M114 334v33M115 333v1M115 335v26M115 362v2M116 332v2M116 335v2M116 338v26M117 327v1M117 331v35M118 335v30M118 369v2M119 331v33M119 366v1M119 369v2M120 331v1M120 335v2M120 338v31M120 370v1M121 337v34M122 334v5M122 340v26M122 367v1M123 338v38M124 340v28M124 369v1M125 337v30M126 331v37M126 369v1M127 333v37M128 338v29M129 336v28M130 331v1M130 333v32M130 366v3M131 332v31M131 366v1M132 329v29M132 359v5M133 327v34M133 367v1M134 322v38M135 323v35M135 361v1M136 324v38M137 322v1M137 326v1M137 328v32M138 325v35M139 324v35M140 321v35M141 321v36M142 324v33M143 316v39M144 323v33M144 357v2M145 317v2M145 325v28M146 319v38M147 320v3M147 324v31M148 321v36M148 358v1M149 320v40M150 323v38M150 362v2M151 319v35M151 355v1M152 322v37M153 325v32M154 326v35M155 322v4M155 330v30M156 330v1M156 332v32M157 327v2M157 330v27M157 358v1M157 364v3M158 332v1M158 334v31M159 336v35M159 376v1M160 335v32M161 339v28M161 368v1M161 370v1M161 372v1M162 342v24M162 367v1M162 377v1M163 343v34M164 349v30M165 338v1M165 340v1M165 343v32M165 376v5M165 385v1M166 345v1M166 347v33M167 347v37M168 354v31M169 354v30M170 358v21M170 380v6M171 355v34M172 356v28M172 387v3M172 391v1M173 358v32M174 356v34M174 391v1M174 393v1M174 397v1M175 361v2M175 364v26M176 357v30M177 360v27M178 360v29M179 356v32M180 356v1M180 358v2M180 362v24M181 356v32M182 355v1M182 357v25M183 350v31M184 347v28M184 376v3M185 344v1M185 346v5M185 352v18M185 379v1M186 337v33M186 371v1M186 376v1M187 337v30M187 368v3M187 372v2M188 336v32M189 331v31M190 320v1M190 328v29M190 358v1M191 319v35M191 355v2M191 358v1M191 361v1M192 320v1M192 322v36M193 315v33M193 350v1M194 315v29M195 308v7M195 316v25M196 310v30M197 297v3M197 306v2M197 310v27M197 340v1M198 303v32M199 298v37M200 290v39M200 335v1M201 295v1M201 297v16M201 314v3M201 318v15M202 285v3M202 290v4M202 295v2M202 299v34M203 289v37M203 328v4M203 333v1M204 288v12M204 303v24M204 328v1M205 286v10M205 298v29M205 332v4M206 285v6M206 293v28M207 288v34M207 323v2M208 285v21M208 307v14M209 297v34M210 285v1M210 287v26M210 314v12M211 291v22M211 315v1M211 317v4M211 322v1M212 284v1M212 286v1M212 288v13M212 302v1M212 305v1M212 307v20M213 283v1M213 286v21M213 308v13M213 322v8M214 284v1M214 291v31M215 281v5M215 287v40M216 280v8M216 291v15M216 307v2M216 312v2M216 317v7M216 327v2M216 331v1M217 289v15M217 305v14M218 274v2M218 285v3M218 289v24M218 314v7M219 280v2M219 283v1M219 289v33M219 326v2M220 293v1M220 297v9M220 307v6M220 314v1M220 316v13M221 283v1M221 285v18M221 304v4M221 310v11M222 282v1M222 290v1M222 293v12M222 306v16M223 286v7M223 294v25M224 283v38M225 280v6M225 287v9M225 297v24M225 330v4M226 288v31M227 286v3M227 290v2M227 293v1M227 295v1M227 297v34M228 285v16M228 302v9M228 312v14M229 286v4M229 291v1M229 294v26M229 321v5M229 328v4M230 286v18M230 305v20M231 279v1M231 282v1M231 288v11M231 302v13M231 316v8M232 281v1M232 283v32M232 321v4M233 279v1M233 282v1M233 284v2M233 292v21M233 315v2M233 319v1M234 284v25M234 310v9M234 320v1M234 322v8M234 332v1M235 280v3M235 284v7M235 292v29M235 322v4M235 327v3M235 331v1M235 333v1M236 279v6M236 286v12M236 300v25M237 284v7M237 292v3M237 298v6M237 309v1M237 311v2M237 314v9M238 277v1M238 279v1M238 281v3M238 288v1M238 290v4M238 296v15M238 312v21M239 280v32M239 313v3M239 321v2M239 324v1M240 279v1M240 283v37M240 323v1M240 329v1M241 284v8M241 293v20M241 316v12M241 329v1M242 282v41M243 285v1M243 287v10M243 299v15M243 317v4M243 322v1M243 325v3M244 270v1M244 281v1M244 284v33M244 320v1M245 284v2M245 287v2M245 290v3M245 294v1M245 297v28M246 274v1M246 281v2M246 287v16M246 307v12M246 320v1M246 331v1M247 286v21M247 310v11M248 287v35M249 286v26M249 313v5M249 319v3M249 324v1M250 282v1M250 291v28M251 292v1M251 294v25M251 321v2M252 293v12M252 306v11M252 324v1M253 286v44M254 282v1M254 284v11M254 297v13M254 311v8M254 322v2M254 326v1M254 328v1M255 281v2M255 291v1M255 293v1M255 297v27M255 325v1M255 327v1M256 280v40M256 323v2M256 327v1M257 278v20M257 302v10M257 313v2M257 317v10M258 289v2M258 292v9M258 302v5M258 309v8M258 318v1M258 323v3M258 327v2M259 290v1M259 294v27M259 323v2M260 279v1M260 288v1M260 291v17M260 309v1M260 311v19M261 288v37M262 285v34M262 321v1M263 294v4M263 299v13M263 313v1M263 315v3M263 323v1M264 290v3M264 294v35M265 281v2M265 285v7M265 293v33M266 286v3M266 290v17M266 308v9M266 318v4M266 325v1M266 330v1M267 286v4M267 292v30M267 327v2M268 281v4M268 286v2M268 290v26M268 321v1M268 324v1M268 326v3M269 292v23M269 317v1M269 319v1M269 323v3M269 327v1M269 329v1M270 285v3M270 290v4M270 295v33M270 329v1M271 290v2M271 297v24M271 324v6M272 277v1M272 285v1M272 288v36M273 282v7M273 290v2M273 293v23M273 320v2M274 290v35M275 284v9M275 295v26M275 322v4M276 284v1M276 287v34M276 332v1M277 292v28M277 324v1M277 329v1M278 286v2M278 289v28M278 330v1M279 281v1M279 288v1M279 290v35M280 286v37M280 325v5M281 292v1M281 295v14M281 310v15M282 290v13M282 307v1M282 309v9M282 319v7M283 280v8M283 289v2M283 293v23M283 317v4M283 322v1M284 284v37M284 326v3M285 281v3M285 296v18M285 316v10M286 281v1M286 284v7M286 292v13M286 306v15M286 322v1M287 280v1M287 282v6M287 291v7M287 299v1M287 302v1M287 304v10M287 319v10M287 332v6M288 278v7M288 287v10M288 298v32M289 281v2M289 287v2M289 290v34M290 291v31M290 331v1M291 287v28M291 316v16M292 287v3M292 292v32M292 327v2M292 331v2M293 282v34M293 326v1M294 283v4M294 288v2M294 293v1M294 295v10M294 306v21M295 286v2M295 291v21M295 314v3M295 319v3M296 287v3M296 293v34M296 329v2M297 284v1M297 286v4M297 292v16M297 309v5M297 315v12M298 284v1M298 286v12M298 300v1M298 302v2M298 305v4M298 310v19M298 331v1M299 283v38M300 282v1M300 287v1M300 289v3M300 293v30M301 280v3M301 284v8M301 293v17M301 311v11M301 324v3M302 280v1M302 282v38M303 274v1M303 294v26M303 323v7M304 287v20M304 308v15M305 288v3M305 294v21M305 316v4M306 284v5M306 290v34M307 288v16M307 307v15M307 336v1M308 288v29M308 318v1M308 320v1M308 328v1M308 330v5M309 282v3M309 286v1M309 291v38M310 284v9M310 294v9M310 304v25M311 287v1M311 289v32M312 277v2M312 288v2M312 291v23M312 320v6M313 287v3M313 291v4M313 296v1M313 299v17M313 318v13M313 334v1M314 288v29M314 318v1M315 295v3M315 299v24M315 326v1M315 330v6M316 287v3M316 291v3M316 296v28M316 325v1M316 327v2M317 282v10M317 293v35M318 280v1M318 282v2M318 285v4M318 291v28M318 320v4M318 326v2M319 284v2M319 289v2M319 293v16M319 310v1M319 315v9M319 327v1M320 292v11M320 304v24M320 329v1M321 284v2M321 289v2M321 292v30M321 324v1M321 328v1M322 279v2M322 284v5M322 292v18M322 311v7M322 323v3M323 259v1M323 285v1M323 293v1M323 296v3M323 300v29M324 283v1M324 285v1M324 288v11M324 301v1M324 303v2M324 306v13M325 283v15M325 299v18M325 319v1M325 322v1M326 285v36M326 322v1M326 327v1M326 333v2M327 284v1M327 287v1M327 289v7M327 297v24M328 292v1M328 296v5M328 302v22M328 325v3M328 329v1M329 289v31M329 323v1M330 274v2M330 281v33M330 315v1M330 317v2M330 320v4M331 281v4M331 287v23M331 311v3M331 321v1M331 324v1M332 285v12M332 299v25M333 286v1M333 293v23M333 318v2M334 284v7M334 294v26M334 321v5M335 285v27M335 313v9M335 328v1M336 284v19M336 307v13M337 290v14M337 305v20M337 326v1M337 332v2M338 284v1M338 293v14M338 309v11M338 321v3M338 326v2M339 281v1M339 284v28M339 314v3M339 318v4M339 323v2M340 286v1M340 288v4M340 294v2M340 297v2M340 300v28M340 329v2M341 288v1M341 297v21M341 319v11M341 332v1M342 288v1M342 290v6M342 301v18M343 291v2M343 300v17M343 318v5M343 324v1M344 289v39M344 330v1M345 275v35M345 313v1M346 282v1M346 289v28M346 330v1M347 276v3M347 292v2M347 295v2M347 298v2M347 301v14M347 316v1M347 318v1M347 320v1M347 323v3M348 284v37M349 288v12M349 301v2M349 304v18M350 280v1M350 284v3M350 288v28M350 320v4M351 283v1M351 285v2M351 289v1M351 293v31M351 329v2M352 288v7M352 297v15M352 313v12M353 282v11M353 295v18M353 315v1M353 318v7M353 328v1M354 281v1M354 286v2M354 291v5M354 298v16M354 315v2M354 318v3M355 289v1M355 291v1M355 293v11M355 306v18M356 280v1M356 286v1M356 289v28M356 319v7M356 333v1M357 286v27M357 314v14M358 279v2M358 285v16M358 302v9M358 313v5M358 319v1M358 324v5M358 330v1M359 290v8M359 299v20M359 320v9M359 333v1M360 290v1M360 292v1M360 296v2M360 300v20M360 334v1M361 288v3M361 293v26M361 330v1M361 343v1M362 290v2M362 294v38M363 288v35M363 324v7M364 296v28M364 325v6M364 333v2M365 292v2M365 302v23M365 326v4M366 306v12M366 319v19M367 297v28M367 326v12M368 305v4M368 310v32M369 307v27M369 335v5M369 344v1M370 301v3M370 306v5M370 312v26M370 346v3M371 307v38M372 312v22M372 338v5M373 312v2M373 317v24M373 344v1M373 347v6M374 313v31M374 346v1M374 349v3M375 315v2M375 321v31M375 353v1M376 318v34M377 319v34M377 354v2M378 319v34M379 322v30M379 353v8M380 330v1M380 333v29M381 334v25M381 360v1M381 362v1M382 327v32M382 360v7M383 327v31M383 360v1M383 363v1M384 323v1M384 328v31M384 365v1M385 332v28M386 324v1M386 331v26M386 361v2M387 334v35M388 333v35M388 369v1M389 336v32M389 369v5M390 337v2M390 340v23M390 364v2M391 336v1M391 338v32M392 332v36M392 369v4M392 376v1M393 340v29M393 370v1M393 372v2M394 334v1M394 337v25M394 363v6M395 336v35M396 337v2M396 343v1M396 347v24M397 332v1M397 341v27M398 338v30M398 370v1M398 372v1M398 375v1M399 344v20M399 365v2M400 334v1M400 337v3M400 344v31M401 343v30M402 342v31M402 374v1M402 377v1M403 334v2M403 337v37M404 335v1M404 340v1M404 343v28M404 375v1M405 339v2M405 343v1M405 345v27M406 338v36M407 343v1M407 345v33M408 341v5M408 347v21M408 369v1M408 374v1M409 329v1M409 331v1M409 334v7M409 342v32M409 376v1M410 336v2M410 339v1M410 341v10M410 355v1M410 357v12M410 371v4M411 342v31M412 335v1M412 337v2M412 340v36M413 336v2M413 340v32M413 375v1M414 341v1M414 343v34M415 337v3M415 341v29M415 375v2M416 336v2M416 340v32M416 373v1M417 342v30M418 347v31M418 379v1M419 345v26M419 372v3M420 338v33M421 338v1M421 340v1M421 342v26M421 370v1M422 343v24M422 368v5M423 338v32M423 372v1M424 339v1M424 343v32M425 335v3M425 344v25M425 371v1M426 341v43M427 341v36M428 341v1M428 345v31M429 341v33M430 339v35M431 342v1M431 346v28M432 342v29M433 333v10M433 344v26M433 371v1M434 337v34M435 338v39M436 338v2M436 341v1M436 343v29M437 340v36M438 344v32M439 338v37M440 345v1M440 348v28M441 347v24M441 373v1M442 344v31M443 343v31M443 378v1M444 340v7M444 349v28M444 378v1M445 344v27M445 374v6M446 344v1M446 348v1M446 352v26M447 341v32M448 342v9M448 354v24M449 341v29M450 347v26M451 341v1M451 343v1M451 346v27M452 343v1M452 346v24M453 343v30M453 375v1M454 338v33M454 374v3M454 378v1M455 343v32M456 333v1M456 335v6M456 342v1M456 344v30M457 334v1M457 337v37M457 375v1M458 337v38M458 376v2M459 344v24M459 369v1M459 371v5M460 334v2M460 344v32M461 347v26M461 377v2M461 381v1M462 339v31M463 341v39M464 341v34M465 339v1M465 341v4M465 347v26M465 374v1M465 376v2M465 379v1M466 336v1M466 339v4M466 345v10M466 356v19M466 376v1M467 343v33M468 338v36M469 344v22M469 370v1M469 374v2M470 341v13M470 355v13M471 340v2M471 344v29M472 346v25M472 374v1M473 343v35M473 379v2M474 339v6M474 346v17M474 364v6M475 339v30M475 370v4M476 331v2M476 339v2M476 342v30M476 373v2M477 343v2M477 348v32M478 343v38M479 340v30M479 371v2M480 341v31M480 375v4M481 339v29M481 369v4M482 345v27M483 343v29M483 377v1M484 342v1M484 344v32M485 342v29M485 372v1M485 383v1M486 344v29M486 374v2M487 341v28M487 372v2M488 342v2M488 345v29M488 380v1M489 343v2M489 346v20M489 370v6M490 342v29M491 340v2M491 343v2M491 348v2M491 351v26M492 339v5M492 345v31M493 343v31M494 338v2M494 341v2M494 344v28M495 339v4M495 344v30M496 339v1M496 342v29M497 338v1M497 340v36M497 377v1M498 337v1M498 339v32M498 372v2M499 343v29M499 374v2M500 342v27M500 370v3M501 341v28M501 370v1M501 372v1M502 339v1M502 341v34M503 340v31M504 338v29M504 368v1M504 371v1M504 373v7M505 341v33M506 340v29M506 370v2M506 375v1M507 339v4M507 344v33M507 378v1M508 342v32M509 344v27M509 377v2M510 340v30M511 342v1M511 344v27M512 341v37M513 336v2M513 339v5M513 345v31M513 379v1M514 343v28M515 346v27M515 374v1M516 337v1M516 340v4M516 345v27M516 373v2M517 346v31M518 343v31M518 376v3M519 338v2M519 341v2M519 345v24M520 342v36M521 344v26M522 339v1M522 341v28M522 371v1M523 335v45M524 335v1M524 337v2M524 343v36M525 342v36M526 344v29M527 336v39M528 343v29M528 373v2M529 336v33M529 370v1M530 337v1M530 344v1M530 348v23M531 338v1M531 340v34M532 344v10M532 355v18M533 337v28M533 366v3M533 371v1M534 338v31M534 375v2M535 344v30M535 375v1M536 343v24M537 336v1M537 343v31M538 341v3M538 351v21M538 374v1M539 341v29M540 328v1M540 333v1M540 338v14M540 353v25M541 343v32M542 344v31M543 340v3M543 344v29M544 337v30M544 369v3M544 374v2M545 340v34M546 342v32M547 346v29M548 337v39M549 343v15M549 359v15M550 344v29M550 374v1M551 342v31M552 335v2M552 339v1M552 341v27M552 369v1M553 336v1M553 343v26M553 370v5M554 347v25M554 373v2M555 336v2M555 340v1M555 343v24M555 369v3M556 342v4M556 347v27M557 344v31M558 339v40M558 380v1M559 334v2M559 345v36M559 382v1M560 346v4M560 351v25M561 342v2M561 345v27M561 373v1M561 377v2M562 342v3M562 347v1M562 349v1M562 351v23M562 375v1M563 354v28M563 383v2M564 345v1M564 349v5M564 356v34M565 357v2M565 360v29M566 359v1M566 361v30M567 367v29M568 371v28M569 371v4M569 376v21M569 398v1M569 406v3M570 369v1M570 373v2M570 376v31M571 376v35M571 412v2M572 383v25M572 409v7M573 389v1M573 393v20M574 384v1M574 390v24M574 417v2M575 384v4M575 389v1M575 392v29M575 422v1M576 387v1M576 391v31M577 397v20M577 418v1M578 398v25M579 395v29M580 402v21M581 395v26M582 393v4M582 398v1M582 401v1M582 404v22M583 401v25M584 395v2M584 399v1M584 404v24M585 402v24M586 397v4M586 402v26M587 407v2M587 410v19M588 408v24M589 403v2M589 406v23M590 403v2M590 406v23M590 431v1M591 409v1M591 411v19M592 404v2M592 410v19M593 407v23M594 401v1M594 405v2M594 410v21M595 409v22M596 411v20M597 413v18M598 414v19M599 416v17M600 413v19M600 433v1M601 414v16M602 418v14M603 416v15M604 415v17M605 416v17M606 416v16M607 419v13M608 419v14M609 417v15M610 419v13M611 418v14M612 420v12M613 418v15M614 419v14M615 420v13M616 420v12M617 420v13M618 419v14M619 421v12M620 420v12M621 420v13M622 420v13M623 420v13M624 419v14M625 420v14M626 419v13M627 420v12M628 419v14M629 421v11M630 421v12M631 420v12M632 419v14M633 419v14M634 420v13M635 420v13M636 419v14M637 420v12M638 419v15M639 420v13M640 421v12M641 420v13M642 419v14M643 420v13M644 420v13M645 420v13M646 420v14M647 421v13M648 419v14M649 420v13M650 419v14M651 420v13M652 420v14M653 420v14M654 420v13M655 420v13M656 420v13M657 420v14M658 420v14M659 420v13M660 420v13M661 420v13M662 420v13M663 421v12M664 419v13M665 420v14M666 420v12M667 420v13M668 418v16M669 421v13M670 420v13M671 420v13M672 421v12M673 420v14M674 420v14M675 420v13M676 420v13M677 421v12M678 419v14M679 420v14M680 420v13M681 420v14M682 420v13M683 420v13M684 420v14M685 420v14M686 421v12M687 420v14M688 420v12M689 420v14M690 421v12M691 420v13M692 420v14M693 420v13M694 420v14M695 421v13M696 420v13M697 420v13M698 421v12M699 421v12M700 421v12"/><path stroke="#00da00" d="M1 438v8M2 437v10M3 438v9M4 437v9M5 437v9M6 438v8M7 438v9M8 437v9M9 439v8M10 437v9M11 437v10M12 438v9M13 437v9M14 438v8M15 437v9M16 437v9M17 437v10M18 437v10M19 438v9M20 437v10M21 438v9M22 437v10M23 437v9M24 437v10M25 438v9M26 437v9M27 437v10M28 438v9M29 437v10M30 438v9M31 438v9M32 437v9M33 437v9M34 437v9M35 437v10M36 437v9M37 437v10M38 438v9M39 437v10M40 437v10M41 437v10M42 437v10M43 437v10M44 437v10M45 437v10M46 438v9M47 438v8M48 438v9M49 437v9M50 437v9M51 437v9M52 437v9M53 438v9M54 437v9M55 436v11M56 436v11M57 437v10M58 435v11M59 425v12M60 418v12M61 410v12M61 423v1M62 402v15M63 394v16M64 389v13M65 381v16M66 372v1M66 374v14M66 390v1M67 365v2M67 368v18M67 387v1M68 359v1M68 361v17M69 356v22M70 353v14M70 368v1M70 370v2M71 346v18M72 337v1M72 339v21M73 336v25M74 332v2M74 336v20M75 332v23M76 328v26M77 323v27M78 328v18M78 352v1M79 320v2M79 326v9M79 338v1M79 341v2M80 324v1M80 326v16M80 349v1M81 317v1M81 320v1M81 322v6M81 330v10M81 342v4M81 347v1M81 349v1M82 329v17M83 323v25M84 317v26M85 324v18M85 343v2M86 321v25M87 320v2M87 323v25M87 349v1M87 352v1M88 323v25M89 319v18M89 338v7M89 346v1M90 319v23M91 317v9M91 327v1M91 330v20M92 323v22M92 347v1M93 320v7M93 328v13M93 344v1M94 320v1M94 323v19M94 344v1M95 321v2M95 327v20M96 319v18M96 340v5M96 346v2M97 312v1M97 315v2M97 319v3M97 323v9M97 335v7M97 343v3M97 347v1M98 324v19M99 323v24M100 319v1M100 321v10M100 332v16M101 317v8M101 328v4M101 333v2M101 336v7M101 347v1M102 321v6M102 328v16M103 321v3M103 326v24M104 321v1M104 323v19M105 320v1M105 325v20M106 324v1M106 326v23M107 326v1M107 331v17M108 325v21M108 347v3M109 321v1M109 329v14M109 345v9M110 331v22M111 334v8M111 343v9M112 332v23M112 357v1M113 334v25M113 360v2M114 326v1M114 337v20M114 360v2M115 337v23M116 340v23M117 335v27M117 363v1M118 335v1M118 337v1M118 339v2M118 342v22M118 369v1M119 336v1M119 338v10M119 349v14M120 343v17M120 361v2M120 370v1M121 340v15M121 364v3M121 368v2M122 343v2M122 346v1M122 349v15M123 340v23M124 341v18M124 360v2M125 338v2M125 341v23M126 341v5M126 347v15M126 363v1M127 336v5M127 342v23M128 341v4M128 346v16M128 363v2M129 337v24M130 335v2M130 338v22M131 332v1M131 335v3M131 340v17M132 334v20M133 338v1M133 341v4M133 346v2M133 349v1M133 351v7M133 359v1M134 326v4M134 331v2M134 334v2M134 339v3M134 343v8M134 353v4M134 358v2M135 327v1M135 332v2M135 335v1M135 337v1M135 339v14M136 332v20M136 353v2M136 356v1M137 329v3M137 334v2M137 337v14M137 352v3M138 328v8M138 337v20M139 326v27M139 355v3M140 324v31M141 329v8M141 339v5M141 345v3M142 328v1M142 332v17M143 319v2M143 323v1M143 329v25M144 325v26M145 325v27M146 335v12M146 349v1M146 356v1M147 329v2M147 332v21M148 321v1M148 323v2M148 326v4M148 332v1M148 334v1M148 336v12M149 326v27M150 332v23M150 357v1M151 323v5M151 331v13M151 346v8M152 325v1M152 327v8M152 337v6M152 344v11M153 330v1M153 333v17M154 327v1M154 333v2M154 337v2M154 340v16M155 335v20M155 357v2M156 333v1M156 335v19M156 357v2M156 360v2M157 333v1M157 335v22M158 337v17M158 355v8M159 337v2M159 340v7M159 349v17M159 376v1M160 335v1M160 337v26M160 365v1M161 344v1M161 346v2M161 349v16M161 368v1M162 343v21M163 347v2M163 350v4M163 355v3M163 359v13M164 353v19M165 346v21M165 368v1M165 373v2M166 352v3M166 356v16M167 353v1M167 356v2M167 359v20M168 358v13M168 372v1M168 376v8M169 361v1M169 363v16M170 362v14M171 358v26M172 361v18M172 380v3M173 360v1M173 364v1M173 366v22M174 365v19M174 385v1M175 367v18M176 362v1M176 365v18M176 384v1M177 363v14M177 381v3M178 366v20M179 361v11M179 373v2M179 379v7M180 362v21M181 359v1M181 363v1M181 365v15M182 360v1M182 363v2M182 366v4M182 371v5M182 377v1M183 353v26M184 348v1M184 351v2M184 355v17M185 353v14M186 339v4M186 347v1M186 349v15M186 365v1M187 340v5M187 347v1M187 350v11M187 368v1M188 338v1M188 341v14M188 356v6M188 363v1M189 335v6M189 345v16M190 332v9M190 342v12M191 320v1M191 333v10M191 344v5M192 327v15M192 343v1M192 352v1M193 323v6M193 334v9M194 318v3M194 325v16M195 316v18M195 336v3M196 312v22M197 313v1M197 315v8M197 324v4M197 329v2M197 332v1M197 334v2M198 308v5M198 314v1M198 316v8M198 327v1M198 331v1M199 307v3M199 313v10M199 330v1M200 293v4M200 303v5M200 309v3M200 313v1M201 298v1M201 300v7M201 308v1M201 322v1M201 326v1M201 328v1M202 309v2M202 314v3M202 319v1M202 322v1M202 324v1M203 293v3M203 297v2M203 300v1M203 307v1M203 310v2M203 313v1M203 316v1M204 291v2M204 295v1M204 317v1M204 319v4M205 289v1M205 298v1M205 306v4M205 311v4M205 332v1M206 308v9M207 300v4M207 312v1M207 316v1M208 292v1M208 298v4M208 304v1M208 310v2M209 301v10M209 312v4M209 328v2M210 290v1M210 294v4M210 299v7M210 325v1M211 297v1M211 299v6M211 306v1M212 292v6M212 313v1M212 317v4M213 299v1M213 309v10M213 322v1M213 328v1M214 311v1M214 315v6M215 292v1M215 294v3M215 303v8M216 293v4M217 296v1M217 298v1M217 308v1M217 310v1M217 312v1M218 292v1M218 298v1M218 301v1M218 303v5M218 312v1M218 316v1M219 292v2M219 295v3M219 316v2M220 302v1M220 322v4M221 290v5M221 297v1M221 320v1M222 313v7M223 289v1M223 295v1M223 298v1M223 303v1M223 305v11M224 306v6M224 313v2M225 280v1M225 299v2M225 302v5M225 312v5M226 297v8M226 306v2M226 312v3M227 303v4M227 308v3M227 316v1M228 287v6M228 295v1M228 303v4M228 309v1M228 315v4M228 321v1M229 296v5M229 307v1M230 293v6M230 308v2M230 311v2M230 314v1M231 290v5M231 307v2M231 310v1M231 318v3M232 304v6M233 294v6M233 301v2M233 307v1M234 298v1M234 301v1M234 325v1M235 296v3M235 304v2M235 307v1M235 309v3M235 319v1M236 307v1M237 289v1M238 300v1M238 308v1M238 316v1M238 321v1M239 290v3M239 294v2M239 297v1M239 306v1M240 305v7M242 290v1M242 293v1M242 295v5M242 304v1M242 315v1M242 318v4M243 301v8M244 290v2M244 294v2M244 300v2M244 306v1M245 300v7M245 318v3M246 291v3M247 294v1M247 297v1M247 302v1M247 314v4M248 292v1M248 294v9M248 310v2M249 290v2M249 301v1M249 303v7M250 294v5M250 300v3M250 306v2M250 309v7M251 297v4M251 304v1M251 311v1M251 315v2M252 296v3M252 300v2M252 312v1M253 288v7M253 300v3M253 307v2M253 310v2M253 314v1M253 319v2M255 299v1M255 302v2M255 311v4M256 286v1M256 304v4M256 310v5M257 280v1M257 290v2M257 293v1M257 305v1M257 307v1M258 314v2M259 301v2M259 305v2M259 309v7M260 301v1M260 315v5M261 290v2M261 293v2M261 306v4M261 311v2M261 318v1M262 298v13M263 303v6M264 301v13M264 316v1M264 325v2M265 299v10M265 315v1M265 320v1M265 322v1M265 324v1M266 292v5M266 299v3M267 296v5M267 310v1M267 312v4M268 297v1M268 302v1M268 306v7M269 303v1M269 311v1M270 300v4M270 306v1M270 308v5M270 314v3M270 324v1M271 300v10M271 318v1M272 298v1M272 307v2M272 311v3M272 317v2M273 294v3M273 298v1M273 304v2M273 307v5M274 301v12M274 320v1M275 286v1M275 288v1M275 306v5M276 295v7M276 303v1M276 305v1M276 310v1M276 314v2M276 317v1M277 298v9M278 297v1M278 300v2M279 298v1M279 304v8M279 314v1M279 317v1M279 320v4M280 289v1M280 306v8M281 302v2M281 310v1M281 317v1M281 321v1M282 293v6M282 300v1M283 296v1M283 298v8M283 309v2M284 288v7M284 305v4M284 310v1M284 316v3M285 300v1M285 306v4M285 311v1M286 298v2M286 307v2M286 310v9M287 309v3M288 278v3M288 307v1M288 309v1M288 326v1M289 298v1M289 301v4M289 306v1M289 308v1M289 316v6M290 320v1M291 290v1M291 292v1M291 304v1M291 306v1M291 308v1M291 311v1M292 303v1M292 306v8M292 317v2M293 297v1M293 300v2M293 308v6M294 311v7M294 320v3M295 299v2M295 302v2M295 305v2M296 287v1M296 298v4M296 313v8M297 294v1M297 297v3M297 302v1M297 321v1M298 323v1M298 327v1M299 286v1M299 289v1M299 291v4M299 296v3M299 308v8M300 299v8M300 308v1M300 310v1M300 312v2M300 315v2M300 318v1M301 295v5M301 305v1M301 314v2M301 317v1M302 286v8M302 299v1M302 307v1M302 310v1M303 296v1M303 298v4M303 307v6M303 326v1M304 289v2M304 311v1M304 319v2M305 298v8M305 308v1M306 286v1M306 292v5M306 298v1M306 310v1M306 312v3M307 291v1M307 299v1M308 292v4M308 299v1M308 312v1M309 293v2M309 297v2M309 300v1M309 311v1M309 313v1M309 321v1M310 307v1M310 317v2M310 320v4M311 293v1M311 295v20M312 293v1M312 299v1M312 304v7M313 302v2M313 305v1M313 307v3M313 321v1M313 324v1M314 305v1M315 304v3M315 308v1M315 310v1M315 313v2M316 298v3M316 309v3M317 283v3M317 296v8M317 306v2M317 316v1M317 318v1M318 292v1M318 295v3M318 299v6M318 310v1M319 296v2M319 299v1M319 303v1M320 297v2M320 302v1M320 308v7M321 308v6M322 284v1M322 295v10M322 309v1M323 302v2M323 306v3M323 313v1M323 315v1M323 319v1M324 292v1M325 284v1M325 288v5M325 311v2M326 288v1M326 300v3M327 289v2M327 292v1M327 299v3M327 303v1M327 313v6M328 306v10M328 317v2M328 323v1M329 296v1M329 298v7M330 286v1M330 295v10M330 306v1M331 292v1M331 300v1M331 312v1M332 300v1M332 303v1M332 305v1M332 308v3M332 321v1M333 295v1M333 299v1M333 309v1M334 303v9M334 313v3M335 288v1M335 304v2M335 307v2M336 287v4M336 298v1M336 314v2M337 293v7M337 307v5M337 313v1M337 315v1M337 318v3M338 296v1M338 300v2M338 303v1M338 313v1M338 321v2M339 287v1M339 291v6M339 298v7M340 302v1M340 304v3M340 314v2M340 321v1M340 323v2M341 298v4M341 306v8M342 291v2M342 304v2M342 308v1M342 310v5M343 302v9M344 291v1M344 294v1M344 296v9M344 307v1M344 313v11M344 326v1M345 295v1M345 297v2M345 300v1M345 303v1M345 305v1M346 293v1M346 295v3M346 299v7M347 304v2M348 287v23M349 292v1M349 294v4M349 305v3M349 311v1M349 316v1M350 286v1M350 296v2M350 299v3M350 310v1M350 312v2M351 301v2M351 322v1M352 305v2M352 308v1M352 317v1M352 319v1M353 300v8M353 309v1M354 291v1M354 302v8M355 294v1M355 297v1M355 299v1M355 309v1M355 312v1M356 300v1M356 303v3M357 301v2M357 304v1M357 322v1M359 302v2M359 305v1M359 309v2M360 307v1M360 311v1M360 314v1M361 303v4M361 309v2M361 313v3M362 294v3M362 298v4M362 309v1M362 312v2M362 315v4M362 323v1M362 325v2M363 292v1M363 313v1M363 317v1M364 308v1M364 311v1M364 313v2M364 316v1M364 319v2M365 308v9M365 318v1M366 308v2M366 312v1M366 322v7M366 331v3M366 335v1M367 299v5M367 310v2M367 314v7M367 332v1M368 314v5M368 320v2M369 312v2M369 316v2M369 328v2M370 314v1M370 318v4M370 328v2M371 309v2M371 319v1M371 322v1M371 324v1M371 330v3M371 334v2M372 318v13M373 320v8M373 330v8M373 349v2M374 321v1M374 323v1M374 328v8M374 338v1M374 346v1M375 323v7M375 332v8M375 343v5M375 349v1M376 321v7M376 329v3M376 335v8M376 344v1M376 346v2M377 321v4M377 326v1M377 328v16M377 346v1M377 350v2M378 325v1M378 329v14M378 344v8M379 324v2M379 331v12M379 355v1M380 335v9M380 347v1M380 350v3M381 337v20M382 335v10M382 346v4M382 355v1M383 332v1M383 339v10M383 350v3M383 355v1M384 338v9M384 349v2M384 352v3M385 334v16M385 352v6M386 337v7M386 347v2M386 352v2M387 336v7M387 344v11M387 357v4M388 342v1M388 346v9M388 356v1M388 359v1M389 341v8M389 351v1M389 353v2M389 357v2M389 360v3M389 372v1M390 343v9M390 354v5M390 360v1M390 365v1M391 343v7M391 354v7M391 363v3M391 367v1M392 334v1M392 336v1M392 343v17M392 366v1M393 344v12M393 357v1M393 360v7M394 342v14M394 366v1M395 342v22M396 350v4M396 355v1M396 358v1M396 361v1M396 363v6M397 343v6M397 350v4M397 360v2M398 350v15M399 348v11M399 361v1M400 347v7M400 356v13M401 345v3M401 352v12M402 349v5M402 355v8M402 364v1M402 367v1M402 369v1M403 345v1M403 348v12M403 365v1M404 345v1M404 348v6M404 355v7M404 367v1M405 348v4M405 353v4M405 358v1M405 362v1M405 364v7M406 342v1M406 346v2M406 349v2M406 357v4M406 362v8M407 346v2M407 349v1M407 351v3M407 356v4M407 362v2M407 367v6M407 374v1M408 352v12M409 346v1M409 349v4M409 355v2M409 359v3M409 368v1M410 347v2M410 359v8M411 350v6M411 357v1M411 361v1M411 363v4M411 371v1M412 343v2M412 346v2M412 349v11M412 362v2M412 367v1M412 372v1M413 336v1M413 341v1M413 346v3M413 351v3M413 355v12M414 348v2M414 351v12M414 369v3M414 374v1M415 349v2M415 353v3M415 357v1M415 360v2M416 343v24M417 344v18M417 363v7M418 348v6M418 355v6M418 362v6M419 350v14M419 367v1M420 342v1M420 346v1M420 348v12M420 361v7M421 343v1M421 345v1M421 347v1M421 351v1M421 354v9M421 365v1M422 346v3M422 350v1M422 352v12M422 369v1M423 348v1M423 352v3M423 357v8M423 366v1M424 349v20M425 347v1M425 351v13M425 365v3M426 349v2M426 353v1M426 355v12M426 372v3M427 344v2M427 348v17M428 351v4M428 356v4M428 368v1M428 372v1M429 346v12M429 359v2M429 363v1M429 365v1M429 371v1M430 349v1M430 351v4M430 358v15M431 348v17M431 367v2M431 370v3M432 348v23M433 341v1M433 344v1M433 350v7M433 358v1M433 361v1M433 363v5M434 341v6M434 348v5M434 354v9M435 343v1M435 348v4M435 354v3M435 358v1M435 364v2M436 346v9M436 357v3M436 361v6M437 347v2M437 350v16M437 372v1M438 344v1M438 346v1M438 349v4M438 354v5M438 360v9M438 370v1M439 343v1M439 349v12M439 362v3M439 370v1M440 354v14M440 369v3M441 348v20M442 346v1M442 349v3M442 353v7M442 361v1M442 363v4M443 350v1M443 352v9M443 364v4M443 370v3M444 352v1M444 355v1M444 359v1M444 361v2M444 369v2M444 372v1M445 345v1M445 350v7M445 360v7M446 352v2M446 355v6M446 363v1M446 367v7M447 343v1M447 345v1M447 351v8M447 361v6M447 370v2M448 344v2M448 358v12M449 342v1M449 344v5M449 350v8M449 359v4M449 365v1M450 352v3M450 358v1M450 361v5M450 367v1M451 341v1M451 358v9M451 369v1M452 348v20M453 344v6M453 355v11M453 367v1M453 370v1M454 341v1M454 343v9M454 353v4M454 360v1M454 362v1M454 364v5M455 348v19M455 368v1M456 349v2M456 353v15M456 371v1M457 344v1M457 348v2M457 351v13M457 365v2M458 346v2M458 349v2M458 352v10M458 363v1M458 365v1M458 368v2M458 373v1M459 348v1M459 354v12M460 354v10M460 365v1M460 372v2M461 353v2M461 357v10M461 368v3M462 343v4M462 348v15M463 345v1M463 352v1M463 354v8M463 365v6M464 346v4M464 351v1M464 355v1M464 358v1M464 360v5M464 368v3M464 372v1M465 356v9M465 366v2M465 369v1M466 346v3M466 359v1M466 362v6M466 370v2M467 347v13M467 362v2M467 367v3M467 371v2M468 344v5M468 350v3M468 354v15M469 352v11M470 346v1M470 357v5M471 349v1M471 352v6M471 360v2M471 363v4M472 347v20M473 348v7M473 360v11M473 373v1M473 379v1M474 350v2M474 355v5M474 367v1M475 343v10M475 354v1M475 356v10M476 346v1M476 348v2M476 353v5M476 359v10M477 350v13M477 364v1M477 366v1M477 368v2M478 346v1M478 351v7M478 359v6M478 369v2M478 375v1M478 377v1M479 357v8M480 344v2M480 353v14M481 344v16M481 362v1M482 350v10M482 363v5M482 369v1M483 346v13M483 360v1M483 365v4M484 346v1M484 349v3M484 353v19M485 346v1M485 350v16M485 369v1M486 347v10M486 358v2M486 361v1M486 367v1M486 369v2M487 346v1M487 350v7M487 358v8M488 346v19M488 368v3M489 356v1M489 358v5M489 374v1M490 343v11M490 355v4M490 361v4M491 359v8M492 347v1M492 349v24M493 347v4M493 352v7M493 368v2M494 353v9M494 363v1M494 365v2M494 368v1M494 370v1M495 348v4M495 358v11M496 350v15M496 366v3M497 349v1M497 351v15M497 373v1M498 342v2M498 351v10M498 364v1M498 366v2M498 369v2M499 345v2M499 350v17M500 344v2M500 347v4M500 352v1M500 354v4M500 359v8M501 343v15M501 359v7M502 347v1M502 353v16M502 370v1M503 343v1M503 346v1M503 350v19M504 343v3M504 349v12M504 363v3M504 374v1M504 378v1M505 345v2M505 348v4M505 354v7M505 362v1M506 345v5M506 351v7M506 360v2M506 363v4M507 348v1M507 350v2M507 358v10M507 369v3M508 350v17M508 368v1M509 347v9M509 357v8M510 346v1M510 349v2M510 352v16M511 348v3M511 352v3M511 357v1M511 359v10M512 342v1M512 349v10M512 360v3M512 364v8M513 349v6M513 358v12M514 347v20M515 348v1M515 350v5M515 356v3M515 360v8M515 370v1M516 341v1M516 351v4M516 359v2M516 362v7M517 349v1M517 353v3M517 357v19M518 352v4M518 361v10M519 346v2M519 349v7M519 364v2M520 350v25M521 344v1M521 349v1M521 351v3M521 355v4M521 360v6M522 347v9M522 362v1M522 364v1M523 346v16M523 367v1M523 369v2M524 345v1M524 348v10M524 359v2M524 363v1M524 367v2M524 370v2M524 376v1M525 345v1M525 348v1M525 351v2M525 354v7M526 346v1M526 348v1M526 350v2M526 355v10M526 366v1M527 337v1M527 348v17M527 370v3M528 343v1M528 347v20M528 368v1M529 337v1M529 339v3M529 343v5M529 349v3M529 355v1M529 357v1M529 362v3M530 351v11M530 363v5M531 349v1M531 351v5M531 357v2M531 361v5M532 345v1M532 359v12M533 347v16M534 341v2M534 344v1M534 349v1M534 351v13M535 347v6M535 357v7M535 365v1M535 367v1M536 351v11M537 357v11M537 369v2M538 354v12M538 371v1M539 348v17M540 342v4M540 347v2M540 356v1M540 359v1M540 363v1M540 369v3M541 354v6M541 361v10M542 344v1M542 347v8M542 356v3M542 367v1M542 371v1M543 346v10M543 358v11M544 343v3M544 351v1M544 353v13M545 342v1M545 348v24M546 346v1M546 348v1M546 350v1M546 353v2M546 357v14M547 350v2M547 353v1M547 356v14M548 338v1M548 341v1M548 343v1M548 347v2M548 351v2M548 355v1M548 357v4M548 365v1M548 369v1M548 371v2M549 350v1M549 362v2M550 353v17M550 371v1M551 346v5M551 352v1M551 357v3M551 362v1M551 364v1M551 366v2M551 371v1M552 346v14M552 362v1M553 345v1M553 348v9M553 361v2M553 366v1M554 349v21M555 350v3M555 354v9M556 350v7M557 349v2M557 356v6M557 365v2M558 341v13M558 355v13M558 375v1M559 347v1M559 349v16M559 374v1M560 353v11M560 365v1M560 367v3M561 349v19M562 353v3M562 358v10M563 359v1M563 361v1M563 363v7M564 360v13M564 374v10M565 365v2M565 368v1M565 370v3M565 374v8M565 383v1M566 368v15M566 384v1M567 368v1M567 371v2M567 374v7M567 383v1M567 387v7M568 373v23M568 397v1M569 378v12M569 392v3M570 379v2M570 382v4M570 387v4M570 395v2M570 401v1M570 403v2M571 379v14M571 394v1M571 396v12M572 384v1M572 387v1M572 389v9M572 404v1M572 406v1M572 409v1M573 395v15M574 391v6M574 400v1M574 404v2M574 407v2M575 389v1M575 396v3M575 400v1M575 402v1M575 405v8M575 415v1M576 397v16M576 418v1M577 397v17M578 401v5M578 408v10M578 421v2M579 398v5M579 404v1M579 409v6M579 422v1M580 405v18M581 405v15M582 406v12M582 420v1M582 423v1M583 409v15M584 409v14M585 410v1M585 413v12M586 407v2M586 410v16M587 414v9M587 427v1M588 410v16M588 427v3M588 431v1M589 407v1M589 413v8M589 423v1M589 427v1M590 407v1M590 411v18M591 412v14M592 415v13M593 410v18M594 411v1M594 414v17M595 416v14M596 413v15M596 429v1M597 414v13M598 417v15M599 418v1M599 420v12M600 414v17M601 417v10M602 418v14M603 417v13M604 416v16M605 417v14M606 420v12M607 420v11M608 419v1M608 421v11M609 419v13M610 420v12M611 419v12M612 421v10M613 419v12M614 420v11M615 421v10M616 421v11M617 420v12M618 420v12M619 421v12M620 420v11M621 420v12M622 421v11M623 420v13M624 420v12M625 420v13M626 420v12M627 420v10M627 431v1M628 420v13M629 421v10M630 422v10M631 420v11M632 420v12M633 420v12M634 420v12M635 421v11M636 421v10M637 421v11M638 419v13M639 420v13M640 421v12M641 420v11M641 432v1M642 420v13M643 420v12M644 421v11M645 421v12M646 421v12M647 421v11M648 420v13M649 420v12M650 421v11M651 420v11M651 432v1M652 421v12M653 420v12M654 421v11M655 420v11M656 420v13M657 420v13M658 421v12M659 421v12M660 420v12M661 420v12M662 421v11M663 422v11M664 421v11M665 420v13M666 420v12M667 421v11M668 420v12M669 421v12M670 421v12M671 421v12M672 421v10M673 420v12M674 421v12M675 421v12M676 420v13M677 421v11M678 419v1M678 421v11M679 421v12M680 420v13M681 420v12M682 420v1M682 422v10M683 421v12M684 421v12M685 422v10M686 421v12M687 420v14M688 420v11M689 421v12M690 422v10M691 421v12M692 421v11M693 421v12M694 421v13M695 422v11M696 420v12M697 421v12M698 421v11M699 421v12M700 421v11"/><path stroke="#00ee00" d="M1 438v8M2 439v7M3 438v8M4 437v8M5 437v7M5 445v1M6 439v7M7 439v7M8 437v7M9 439v8M10 437v9M11 438v9M12 438v8M13 438v8M14 438v8M15 438v7M16 437v7M17 438v8M18 438v9M19 438v8M20 438v8M21 438v9M22 437v9M23 438v8M24 437v9M25 439v6M26 438v8M27 439v7M28 439v8M29 439v8M30 440v6M31 438v8M32 437v9M33 437v9M34 438v7M35 438v8M36 437v9M37 437v9M38 438v8M39 437v10M40 438v8M41 438v8M42 438v8M43 438v8M44 438v8M45 437v9M46 439v8M47 438v7M48 438v8M49 438v7M50 437v9M51 438v8M52 437v9M53 438v7M53 446v1M54 438v8M55 436v11M56 438v7M57 437v9M58 435v9M58 445v1M59 426v11M60 420v10M61 411v11M62 403v12M63 397v12M64 391v9M65 382v1M65 385v11M66 375v13M67 371v13M68 363v1M68 365v11M69 358v7M69 367v4M69 372v1M70 354v7M70 364v1M71 348v13M71 362v1M72 345v14M73 340v15M73 358v1M74 339v7M74 348v1M75 334v1M75 337v14M76 329v17M76 347v1M76 349v2M77 327v4M77 334v7M77 342v7M78 330v1M78 332v10M78 343v1M79 332v1M80 326v1M80 328v13M81 336v1M82 332v7M82 340v1M83 331v9M83 345v1M84 321v2M84 325v10M84 337v1M85 327v2M85 336v4M86 337v1M86 339v2M87 329v6M87 336v6M88 328v1M88 336v1M88 338v9M89 324v9M89 340v1M90 322v7M90 330v1M90 335v2M90 339v1M91 318v4M91 323v1M91 335v12M91 348v1M92 327v13M92 342v3M93 329v7M93 337v1M94 335v1M94 337v1M95 327v1M95 329v11M95 344v1M96 320v1M96 326v8M96 341v1M96 344v1M97 324v1M97 337v1M98 326v10M98 337v2M99 327v3M99 332v11M100 323v2M100 326v1M100 334v1M100 340v1M100 342v5M101 320v2M101 329v1M101 339v3M102 324v3M102 330v1M102 332v1M102 334v7M102 342v1M103 329v2M103 336v10M104 326v1M104 330v7M104 339v1M105 328v1M105 332v1M105 334v7M105 342v1M106 327v4M106 337v9M107 333v12M108 330v11M109 330v1M109 332v5M109 348v1M109 350v1M109 352v1M110 335v14M111 344v6M112 340v6M112 349v1M113 338v2M113 345v3M113 351v2M114 338v1M114 342v2M114 345v9M115 339v12M116 343v7M116 352v9M116 362v1M117 337v9M117 349v8M117 358v2M118 348v7M118 357v6M119 340v5M119 353v1M120 348v6M121 345v7M121 364v1M121 366v1M122 352v8M122 361v1M123 340v1M123 343v1M123 345v6M123 356v2M123 360v1M124 341v1M124 344v5M124 350v3M124 354v1M124 356v1M124 358v1M125 342v1M125 344v2M125 347v1M125 349v10M126 345v1M126 351v4M126 357v1M127 338v1M127 347v3M127 352v10M128 347v11M128 360v1M129 341v3M129 346v13M130 336v1M130 338v11M130 352v1M130 354v1M130 356v1M131 342v7M131 351v1M131 353v1M132 339v14M133 357v1M134 350v1M135 327v1M135 342v3M135 346v1M135 348v1M135 350v3M136 335v1M136 337v2M136 342v1M136 344v1M136 347v1M137 340v1M137 342v4M137 353v1M138 349v1M139 329v3M139 334v3M139 338v1M139 343v7M140 332v3M140 336v11M140 348v2M140 352v1M141 332v1M141 336v1M141 341v1M141 345v1M142 333v1M142 339v7M143 334v2M143 338v15M144 327v1M144 338v1M144 342v3M144 346v1M144 349v1M145 329v8M145 338v2M145 343v3M146 340v6M147 333v1M147 336v9M147 348v1M147 350v3M148 337v9M149 334v1M149 337v3M149 341v2M149 344v1M150 335v6M150 342v3M151 333v3M151 337v3M151 351v1M153 336v8M154 346v2M154 349v6M155 337v10M155 348v1M155 354v1M155 357v1M156 337v4M156 342v7M157 341v5M157 348v1M157 350v3M158 340v7M158 348v4M158 356v1M158 361v1M159 340v4M159 350v1M159 355v1M159 360v1M160 338v23M161 350v1M161 353v11M162 345v16M162 362v1M163 351v1M163 360v7M164 355v2M164 358v1M164 366v2M165 349v2M165 353v6M165 361v2M165 364v1M166 356v1M166 358v5M166 364v1M166 366v2M167 361v12M168 359v10M168 376v6M169 364v10M170 371v1M171 361v1M171 364v2M171 371v1M171 374v2M171 379v2M172 364v1M172 369v6M173 374v14M174 367v2M174 372v1M174 374v1M174 376v1M174 378v1M174 382v1M175 369v10M176 370v1M176 372v1M176 374v2M176 377v2M176 380v1M177 370v2M178 368v4M178 374v9M178 384v1M179 363v7M180 363v2M180 366v5M180 376v3M181 367v8M181 376v1M181 378v1M182 374v1M183 355v4M183 360v2M183 363v7M183 374v3M184 355v1M184 359v2M185 355v3M185 359v2M186 353v2M186 358v1M187 341v1M187 351v1M187 355v1M187 357v2M188 344v7M188 353v1M188 359v1M189 347v5M189 353v2M190 334v2M190 337v1M190 339v1M190 347v1M190 351v1M191 335v5M192 329v1M192 332v1M192 336v2M192 340v1M193 336v1M193 338v1M194 327v7M194 339v1M195 323v1M195 326v4M196 315v1M196 324v1M196 329v1M196 333v1M197 325v1M198 310v1M199 320v2M200 305v1M201 302v1M206 309v6M209 303v2M209 306v1M209 313v1M211 299v3M213 310v1M213 314v1M214 317v1M215 304v2M222 317v1M222 319v1M223 306v1M229 297v2M231 292v1M233 296v2M242 298v1M242 315v1M243 305v1M245 304v1M247 316v1M249 307v1M255 313v1M259 314v1M260 317v1M263 303v2M264 303v1M264 305v1M264 309v1M268 310v2M271 302v2M271 305v1M271 308v1M274 304v1M274 307v1M277 302v2M279 317v1M283 299v1M283 304v1M284 290v2M286 314v1M286 316v2M292 311v1M296 319v2M299 311v1M300 301v3M300 305v1M305 300v3M308 294v1M311 304v3M311 308v1M312 309v1M318 302v1M320 310v1M322 300v2M322 303v2M337 296v2M337 311v1M342 312v1M343 304v1M343 306v3M346 295v1M346 301v1M348 288v2M354 304v1M356 304v1M362 300v1M365 310v1M365 312v2M365 315v2M366 323v2M366 328v1M372 320v4M372 326v3M373 321v4M374 331v2M375 325v1M375 334v1M376 325v3M376 337v1M376 339v1M377 331v6M377 338v1M377 341v1M378 341v2M378 344v1M379 332v1M379 334v3M380 336v1M380 338v1M380 340v2M381 346v1M382 347v1M383 342v1M385 338v1M385 342v3M386 339v1M386 342v1M387 337v1M387 348v4M388 350v1M389 343v5M390 349v1M391 354v1M391 357v1M392 350v1M393 364v1M394 353v1M395 346v1M395 349v8M395 358v3M396 366v3M398 351v4M398 360v1M398 362v1M399 352v2M399 355v1M400 352v1M401 354v8M402 349v1M402 358v1M403 350v2M404 349v1M405 364v1M406 367v1M407 357v1M408 354v1M408 359v1M408 362v1M410 363v1M413 359v6M414 353v5M414 359v1M414 369v1M416 357v4M416 362v1M416 365v2M417 347v1M417 350v1M417 353v5M418 356v1M419 350v1M419 352v1M419 354v1M419 356v5M420 354v3M420 364v1M421 356v4M422 356v3M422 361v1M423 359v1M423 361v1M424 349v1M424 355v1M424 359v1M424 362v2M425 360v1M426 350v1M426 359v1M426 362v1M426 372v1M427 352v1M427 356v1M427 358v1M429 347v7M430 353v1M430 364v1M430 368v2M430 371v1M431 354v9M432 350v2M432 353v11M432 368v1M433 353v1M436 350v1M437 352v1M437 355v2M437 358v1M437 360v2M438 363v1M438 365v1M439 352v4M440 357v4M440 362v1M441 352v10M441 363v1M441 365v1M442 356v1M442 364v1M443 352v5M446 355v1M446 369v1M447 352v3M448 361v1M448 366v1M449 352v2M449 356v1M450 363v2M451 361v3M451 366v1M452 353v5M453 361v1M454 347v1M454 349v1M454 351v1M455 348v1M455 353v1M455 358v2M455 362v1M455 364v1M456 358v1M456 360v1M457 353v2M457 356v3M458 359v1M459 358v4M462 349v9M462 359v1M463 356v2M463 359v1M464 363v1M465 356v5M467 350v5M467 359v1M468 356v1M468 358v1M468 362v1M468 366v2M469 357v3M469 362v1M470 360v2M471 354v1M472 349v5M473 363v5M475 349v1M475 359v3M477 359v2M479 358v3M479 362v2M480 354v1M480 357v1M480 359v1M480 366v1M481 350v2M482 353v1M483 354v2M484 363v2M484 370v1M485 356v1M485 358v2M485 361v1M486 352v1M487 351v1M488 349v1M488 354v1M490 346v2M492 350v2M492 359v2M492 365v1M492 368v2M493 353v1M495 348v2M495 361v1M495 363v1M495 365v2M496 352v2M496 355v5M496 361v1M497 353v1M497 355v1M497 358v1M497 360v1M497 362v2M500 347v1M500 365v1M501 343v1M501 345v3M501 352v1M501 361v3M502 357v1M502 359v1M502 364v4M503 358v10M504 349v1M504 354v1M506 364v1M507 359v1M507 362v2M508 354v2M508 357v6M508 364v2M509 354v1M509 359v1M510 363v1M511 363v1M511 366v1M512 351v1M514 351v3M514 361v1M514 363v2M515 352v1M515 364v1M516 362v1M517 358v2M517 364v1M517 374v1M518 365v3M520 355v1M520 357v1M520 359v1M520 363v4M521 363v1M522 347v1M522 352v1M523 358v2M524 371v1M525 355v1M526 361v1M527 357v1M527 359v2M528 349v1M528 361v2M528 366v1M529 349v1M530 352v1M530 354v6M532 361v7M533 353v1M533 355v5M534 358v2M535 348v2M535 362v2M536 355v2M537 359v6M537 370v1M538 357v7M539 350v9M539 363v1M541 366v2M542 348v1M542 352v2M543 348v1M543 350v1M543 352v1M543 360v1M544 359v1M545 351v2M545 356v6M546 360v5M547 359v1M547 361v1M547 365v3M550 359v8M552 348v3M552 353v1M552 355v1M553 349v1M553 352v1M554 351v4M554 359v3M554 363v1M555 356v1M556 352v1M558 349v1M558 357v3M559 351v1M559 353v2M560 355v1M560 359v1M561 351v1M561 355v1M561 357v1M561 359v3M561 363v1M563 365v1M563 367v2M564 363v3M564 378v1M564 380v2M565 371v1M565 374v5M566 371v3M566 375v1M566 380v3M567 387v2M568 377v1M568 384v6M569 381v7M571 383v2M571 389v1M571 400v2M571 406v1M572 395v1M573 398v1M573 403v1M575 405v1M575 407v1M576 404v3M576 408v1M577 399v4M577 404v2M577 409v2M578 411v1M579 411v1M579 414v1M580 408v2M580 412v10M581 406v5M582 408v7M583 417v1M584 409v3M584 414v6M585 414v8M586 416v7M587 416v2M587 419v2M588 414v3M588 420v1M588 423v1M590 415v8M590 425v1M591 415v8M592 418v1M592 420v3M593 415v3M593 420v1M593 422v2M593 425v1M593 427v1M594 418v2M594 426v1M594 428v1M595 418v6M596 415v2M596 420v4M596 425v1M597 415v2M597 418v2M597 421v4M598 419v7M598 428v3M599 420v10M600 417v12M601 417v9M602 421v9M603 418v11M604 416v1M604 418v9M604 429v1M605 422v8M606 421v1M606 423v9M607 421v3M607 425v3M608 422v8M609 421v9M610 420v10M611 420v9M612 422v8M613 420v10M614 420v1M614 422v8M615 422v9M616 422v8M616 431v1M617 420v10M618 420v12M619 423v8M620 422v9M621 421v8M621 430v1M622 422v10M623 423v9M624 421v2M624 425v3M624 429v1M625 420v13M626 421v8M626 430v1M627 421v8M627 431v1M628 422v10M629 421v9M630 425v6M631 421v10M632 420v11M633 422v10M634 421v4M634 426v5M635 421v10M636 424v5M637 423v7M638 420v12M639 422v9M639 432v1M640 422v9M641 420v10M642 422v9M643 421v11M644 422v10M645 422v10M646 424v8M647 421v10M648 421v11M649 422v10M650 422v7M651 421v9M652 422v11M653 421v10M654 422v9M655 421v1M655 423v7M656 420v12M657 421v11M658 422v4M658 427v6M659 421v12M660 421v11M661 421v10M662 422v9M663 423v7M663 431v1M664 421v10M665 421v12M666 422v2M666 425v6M667 421v11M668 421v5M668 427v2M669 423v8M670 422v11M671 423v8M672 421v9M673 422v10M674 423v7M675 423v10M676 421v11M677 423v7M678 422v10M679 422v8M679 431v2M680 421v10M681 420v6M682 423v9M683 422v10M684 422v10M685 423v9M686 422v9M686 432v1M687 421v8M688 421v10M689 423v8M690 422v10M691 422v11M692 423v1M692 425v4M692 430v2M693 421v1M693 423v4M693 428v5M694 422v10M695 422v8M696 423v7M697 422v7M697 430v2M698 424v8M699 421v11M700 422v8M700 431v1"/></g><g stroke="#6e6e78" stroke-width="1" fill="none" shape-rendering="crispEdges"><path d="M51.5 46V536" stroke-dasharray="1 9"/><path d="M101.5 46V536" stroke-dasharray="1 9"/><path d="M151.5 46V536" stroke-dasharray="1 9"/><path d="M201.5 46V536" stroke-dasharray="1 9"/><path d="M251.5 46V536" stroke-dasharray="1 9"/><path d="M301.5 46V536" stroke-dasharray="1 9"/><path d="M401.5 46V536" stroke-dasharray="1 9"/><path d="M451.5 46V536" stroke-dasharray="1 9"/><path d="M501.5 46V536" stroke-dasharray="1 9"/><path d="M551.5 46V536" stroke-dasharray="1 9"/><path d="M601.5 46V536" stroke-dasharray="1 9"/><path d="M651.5 46V536" stroke-dasharray="1 9"/><path d="M11 86.5H701" stroke-dasharray="1 9"/><path d="M347 86.5H356" stroke-dasharray="1 1"/><path d="M11 136.5H701" stroke-dasharray="1 9"/><path d="M347 136.5H356" stroke-dasharray="1 1"/><path d="M11 186.5H701" stroke-dasharray="1 9"/><path d="M347 186.5H356" stroke-dasharray="1 1"/><path d="M11 236.5H701" stroke-dasharray="1 9"/><path d="M347 236.5H356" stroke-dasharray="1 1"/><path d="M11 336.5H701" stroke-dasharray="1 9"/><path d="M347 336.5H356" stroke-dasharray="1 1"/><path d="M11 386.5H701" stroke-dasharray="1 9"/><path d="M347 386.5H356" stroke-dasharray="1 1"/><path d="M11 436.5H701" stroke-dasharray="1 9"/><path d="M347 436.5H356" stroke-dasharray="1 1"/><path d="M11 486.5H701" stroke-dasharray="1 9"/><path d="M347 486.5H356" stroke-dasharray="1 1"/><path d="M351.5 38V535" stroke-dasharray="1 1"/><path d="M349.5 46V535M353.5 46V535" stroke-dasharray="1 9"/><path d="M3 286.5H700" stroke-dasharray="1 1"/><path d="M11 284.5H700M11 288.5H700" stroke-dasharray="1 9"/><path d="M51.5 282V291" stroke-dasharray="1 1"/><path d="M101.5 282V291" stroke-dasharray="1 1"/><path d="M151.5 282V291" stroke-dasharray="1 1"/><path d="M201.5 282V291" stroke-dasharray="1 1"/><path d="M251.5 282V291" stroke-dasharray="1 1"/><path d="M301.5 282V291" stroke-dasharray="1 1"/><path d="M351.5 282V291" stroke-dasharray="1 1"/><path d="M401.5 282V291" stroke-dasharray="1 1"/><path d="M451.5 282V291" stroke-dasharray="1 1"/><path d="M501.5 282V291" stroke-dasharray="1 1"/><path d="M551.5 282V291" stroke-dasharray="1 1"/><path d="M601.5 282V291" stroke-dasharray="1 1"/><path d="M651.5 282V291" stroke-dasharray="1 1"/></g><g><path d="M1 167.5H701" stroke="#0a8c0a" stroke-width="1.3" shape-rendering="crispEdges"/><path d="M22 167.500 L26.500 161.500 H40.500 L45 167.500 L40.500 173.500 H26.500 Z" fill="#0a8c0a"/><text x="33.500" y="171.500" font-size="11" fill="#022c02" text-anchor="middle">Y1</text><path d="M20 431.500H701" stroke="#0a8c0a" stroke-width="1" stroke-dasharray="5 5" shape-rendering="crispEdges"/><path d="M657 432 L661.500 426 H675.500 L680 432 L675.500 438 H661.500 Z" fill="#075507" stroke="#0a8a0a" stroke-width="0.8"/><text x="668.500" y="436" font-size="10.500" font-weight="bold" fill="#35c035" text-anchor="middle">Y2</text><path d="M1 427 H15 L22 435 L15 443 H1 Z" fill="#00f400"/><text x="9" y="439.800" font-size="13" font-weight="bold" fill="#000" text-anchor="middle">4</text><text x="551.3" y="102" textLength="67.7" lengthAdjust="spacingAndGlyphs" font-size="12.7" fill="#00e800">Y1:536.0mA</text><text x="551.3" y="118" textLength="67.7" lengthAdjust="spacingAndGlyphs" font-size="12.7" fill="#00e800">Y2:8.000mA</text><text x="551.3" y="134" textLength="69.3" lengthAdjust="spacingAndGlyphs" font-size="12.7" fill="#00e800">ΔY:528.0mA</text><text x="21.7" y="504.5" textLength="44.5" lengthAdjust="spacingAndGlyphs" font-size="12.5" fill="#00d4ec">RMS:----</text><text x="161.7" y="504.5" textLength="45.8" lengthAdjust="spacingAndGlyphs" font-size="12.5" fill="#00d4ec">Freq.:----</text><text x="301.7" y="504.5" textLength="42" lengthAdjust="spacingAndGlyphs" font-size="12.5" fill="#00d4ec">Low:----</text><text x="441.9" y="504.5" textLength="43.7" lengthAdjust="spacingAndGlyphs" font-size="12.5" fill="#00d4ec">High:----</text><text x="581.5" y="504.5" textLength="79.7" lengthAdjust="spacingAndGlyphs" font-size="12.5" fill="#00e800">RMS:169.0mA</text><text x="21.7" y="524.5" textLength="88.3" lengthAdjust="spacingAndGlyphs" font-size="12.5" fill="#00e800">PK-PK:444.7mA</text></g></svg>
<!-- top bar -->
<div class="abs" style="left:179px;top:1px;width:93px;height:31px;border:1px solid #0a4272;"></div>
<div class="abs" style="left:179px;top:17px;width:94px;height:1px;background:#0a4272;"></div>
<!-- right column -->
<div class="btn" style="left:703px;top:78px;width:56px;height:35px;"></div>
<div class="btn" style="left:703px;top:168px;width:56px;height:35px;"></div>
<div class="btn" style="left:703px;top:363px;width:56px;height:35px;"></div>
<div class="btn" style="left:703px;top:455px;width:56px;height:35px;background:#0b5c1c;"></div>
<div class="btn" style="left:760px;top:412px;width:39px;height:118px;background:#0b5c1c;border-radius:7px;"></div>
<div class="abs" style="left:760px;top:464px;width:39px;height:1px;background:#17902a;"></div>
<div class="abs" style="left:760px;top:478px;width:39px;height:1px;background:#17902a;"></div>
<div class="circ" style="left:709px;top:553px;width:31px;height:31px;"></div>
<!-- bottom bar -->
<div class="circ" style="left:0px;top:546px;width:44px;height:44px;"></div>
<div class="circ" style="left:93px;top:546px;width:44px;height:44px;"></div>
<div class="btn" style="left:150px;top:546px;width:61px;height:45px;"></div>
<div class="btn" style="left:260px;top:548px;width:184px;height:43px;border-radius:7px;"></div>
<div class="abs" style="left:319px;top:548px;width:1px;height:43px;background:#0a5a8a;"></div>
<div class="abs" style="left:382px;top:548px;width:1px;height:43px;background:#0a5a8a;"></div>
<div class="btn" style="left:510px;top:547px;width:61px;height:43px;"></div>
<div class="btn" style="left:575px;top:547px;width:61px;height:43px;background:#005f8e;"></div>
<div class="btn" style="left:640px;top:547px;width:61px;height:43px;"></div>
<svg width="800" height="600" viewBox="0 0 800 600"><text x="4" y="24" textLength="84.500" lengthAdjust="spacingAndGlyphs" font-size="27" font-weight="bold" font-style="italic" fill="#1d8fe0" stroke="#1d8fe0" stroke-width="0.9" stroke-linejoin="round">Micsig</text><text x="97.5" y="23" textLength="30" lengthAdjust="spacingAndGlyphs" font-size="16.5" fill="#00f000">RUN</text><text x="213" y="14" textLength="27" lengthAdjust="spacingAndGlyphs" font-size="13" fill="#00e800">280k</text><text x="204" y="30" textLength="45" lengthAdjust="spacingAndGlyphs" font-size="13" fill="#00e800">40kSa/s</text><path d="M351.500 12.300 L346.800 1.800 H356.200 Z" fill="#8a8f99"/><path d="M292 8.500 H289.500 V15.500 H292 M412 8.500 H414.500 V15.500 H412" stroke="#7a8088" fill="none" stroke-width="1"/><path d="M290 12.300 H414" stroke="#22cc22" stroke-width="1.800"/><text x="711" y="48" textLength="41" lengthAdjust="spacingAndGlyphs" font-size="13" fill="#ffffff">Normal</text><text x="716" y="102" textLength="29" lengthAdjust="spacingAndGlyphs" font-size="17" fill="#ffffff">CH1</text><text x="716" y="192" textLength="29" lengthAdjust="spacingAndGlyphs" font-size="17" fill="#ffffff">CH2</text><text x="716" y="387" textLength="29" lengthAdjust="spacingAndGlyphs" font-size="17" fill="#ffffff">CH3</text><text x="710.3" y="471.7" textLength="25.7" lengthAdjust="spacingAndGlyphs" font-size="13.5" fill="#ffffff" font-weight="bold">CH4</text><text x="710.3" y="484.5" textLength="43.4" lengthAdjust="spacingAndGlyphs" font-size="13.5" fill="#ffffff" font-weight="bold">100mA</text><path d="M741 464H751" stroke="#fff" stroke-width="1"/><path d="M741 466.700H751" stroke="#fff" stroke-width="1" stroke-dasharray="2.500 1.200"/><text x="722.4" y="504" textLength="23.2" lengthAdjust="spacingAndGlyphs" font-size="14.5" fill="#ffffff">Full</text><text x="770.8" y="475.8" textLength="17.5" lengthAdjust="spacingAndGlyphs" font-size="10.5" fill="#ffffff">10X</text><path d="M769 446.500H776.500V428.500H782.500V446.500H790" stroke="#fff" fill="none" stroke-width="1.100"/><path d="M769 509.500H776.500V498.500H782.500V509.500H790" stroke="#fff" fill="none" stroke-width="1.100"/><text x="763" y="552" textLength="32" lengthAdjust="spacingAndGlyphs" font-size="14" fill="#1a72b0">16:51</text><rect x="779.500" y="573.500" width="8" height="11.500" fill="none" stroke="#14609a" stroke-width="1"/><rect x="782" y="571" width="3" height="2.500" fill="#14609a"/><rect x="781" y="576.600" width="5" height="7.400" fill="#1ba4dc"/><path d="M716 567 L725 573.700 L734 567" stroke="#fff" fill="none" stroke-width="1.300"/><path d="M14.300 568 L29.400 558 V578 Z" fill="#fff"/><path d="M122.400 568 L107.300 558 V578 Z" fill="#fff"/><text x="56.4" y="573.5" textLength="27" lengthAdjust="spacingAndGlyphs" font-size="15" fill="#ffffff">Fine</text><text x="160.9" y="565.3" textLength="37.7" lengthAdjust="spacingAndGlyphs" font-size="15" fill="#f2f4ff" font-weight="bold">Quick</text><text x="164" y="582.6" textLength="31.8" lengthAdjust="spacingAndGlyphs" font-size="15" fill="#f2f4ff" font-weight="bold">Save</text><path d="M274 578.500H281.500V560.500H287.500V578.500H293.500V560.500H299.500V578.500H306.500" stroke="#fff" fill="none" stroke-width="1.100"/><path d="M397.500 578.500H408.500V560.500H420.500V578.500H431" stroke="#fff" fill="none" stroke-width="1.100"/><text x="330.7" y="574.5" textLength="41.8" lengthAdjust="spacingAndGlyphs" font-size="14" fill="#ffffff">500ms</text><rect x="528.400" y="564.400" width="29.500" height="15.500" rx="7.750" fill="none" stroke="#fff" stroke-width="1.100"/><rect x="525.700" y="560.700" width="29.500" height="15.500" rx="7.750" fill="#002a4f" stroke="#fff" stroke-width="1.100"/><rect x="522.300" y="556.300" width="30.900" height="16.900" rx="8.450" fill="#f4f4f4" stroke="#002a4f" stroke-width="1.600"/><text x="526" y="568.9" textLength="22" lengthAdjust="spacingAndGlyphs" font-size="11" fill="#1a2440">CH1</text><path d="M593.700 554.300H618M593.700 565.700H618" stroke="#fff" stroke-width="1.800"/><path d="M660 551.300V567.500M682 551.300V567.500" stroke="#fff" stroke-width="1.900"/><text x="583.7" y="583.7" textLength="44.3" lengthAdjust="spacingAndGlyphs" font-size="14.5" fill="#ffffff">Cursor</text><text x="648.7" y="583.7" textLength="44.3" lengthAdjust="spacingAndGlyphs" font-size="14.5" fill="#ffffff">Cursor</text></svg>
</body></html>
